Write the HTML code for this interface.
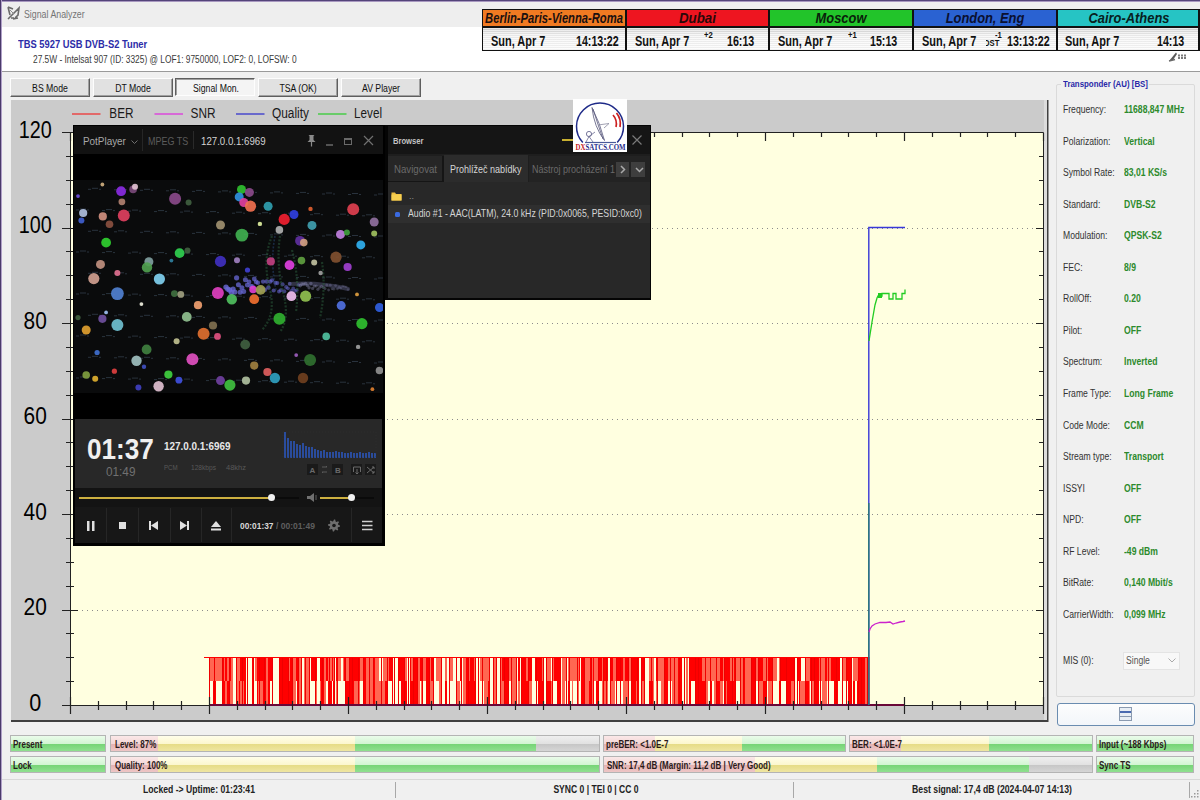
<!DOCTYPE html>
<html><head><meta charset="utf-8">
<style>
*{margin:0;padding:0;box-sizing:border-box}
html,body{width:1200px;height:800px;overflow:hidden;background:#f0f0f0;font-family:"Liberation Sans",sans-serif;position:relative}
.a{position:absolute}
.t{position:absolute;white-space:nowrap;line-height:1}
</style></head><body>
<!-- window frame -->
<div class="a" style="left:0;top:0;width:1200px;height:2px;background:linear-gradient(#54447a 0 60%,#a898c0 60%)"></div>
<div class="a" style="left:0;top:0;width:2px;height:800px;background:linear-gradient(90deg,#4a3a6a 0 60%,#b0a0c8 60%)"></div>
<!-- title bar -->
<div class="a" style="left:2px;top:2px;width:1198px;height:25px;background:#eeeeee"></div>
<svg class="a" style="left:7px;top:6px" width="14" height="14" viewBox="0 0 14 14"><path d="M1 1L6 3M1 1L3 9M1 13L12 2L11 9L8 12M4 12L7 12M6 13L11 12" stroke="#6a6a6a" stroke-width="1.6" fill="none"/><path d="M3 4L7 8" stroke="#8a8a8a" stroke-width="1"/></svg>
<div class="t" style="left:24px;top:9px;font-size:11px;color:#747474;transform:scaleX(0.8);transform-origin:0 0">Signal Analyzer</div>
<!-- header white -->
<div class="a" style="left:2px;top:27px;width:1198px;height:44px;background:#ffffff"></div>
<div class="a" style="left:2px;top:71px;width:1198px;height:1px;background:#9a9a9a"></div>
<div class="t" style="left:18px;top:39px;font-size:11px;font-weight:bold;color:#2c2ca8;transform:scaleX(0.85);transform-origin:0 0">TBS 5927 USB DVB-S2 Tuner</div>
<div class="t" style="left:33px;top:55px;font-size:10px;color:#3a3a3a;transform:scaleX(0.835);transform-origin:0 0">27.5W - Intelsat 907 (ID: 3325) @ LOF1: 9750000, LOF2: 0, LOFSW: 0</div>
<div class="a" style="left:482px;top:9px;width:718px;height:42px;background:#111"></div>
<div class="a" style="left:483px;top:10px;width:142px;height:16px;background:#f07a22"></div>
<div class="a" style="left:483px;top:28px;width:142px;height:22px;background:repeating-linear-gradient(rgba(255,255,255,0.5) 0 1px,rgba(0,0,0,0.04) 1px 2px),linear-gradient(#d2d2d2,#f2f2f2 35%,#fbfbfb)"></div>
<div class="a" style="left:627px;top:10px;width:141px;height:16px;background:#ee1520"></div>
<div class="a" style="left:627px;top:28px;width:141px;height:22px;background:repeating-linear-gradient(rgba(255,255,255,0.5) 0 1px,rgba(0,0,0,0.04) 1px 2px),linear-gradient(#d2d2d2,#f2f2f2 35%,#fbfbfb)"></div>
<div class="a" style="left:770px;top:10px;width:142px;height:16px;background:#22c42a"></div>
<div class="a" style="left:770px;top:28px;width:142px;height:22px;background:repeating-linear-gradient(rgba(255,255,255,0.5) 0 1px,rgba(0,0,0,0.04) 1px 2px),linear-gradient(#d2d2d2,#f2f2f2 35%,#fbfbfb)"></div>
<div class="a" style="left:914px;top:10px;width:142px;height:16px;background:#2a62d2"></div>
<div class="a" style="left:914px;top:28px;width:142px;height:22px;background:repeating-linear-gradient(rgba(255,255,255,0.5) 0 1px,rgba(0,0,0,0.04) 1px 2px),linear-gradient(#d2d2d2,#f2f2f2 35%,#fbfbfb)"></div>
<div class="a" style="left:1058px;top:10px;width:142px;height:16px;background:#26c4c4"></div>
<div class="a" style="left:1058px;top:28px;width:142px;height:22px;background:repeating-linear-gradient(rgba(255,255,255,0.5) 0 1px,rgba(0,0,0,0.04) 1px 2px),linear-gradient(#d2d2d2,#f2f2f2 35%,#fbfbfb)"></div>
<div class="t" style="left:443px;top:11px;width:222px;text-align:center;font-size:14px;font-weight:bold;font-style:italic;color:#1a1010;transform:scaleX(0.8)">Berlin-Paris-Vienna-Roma</div>
<div class="t" style="left:587px;top:11px;width:221px;text-align:center;font-size:14px;font-weight:bold;font-style:italic;color:#2a0808;transform:scaleX(0.95)">Dubai</div>
<div class="t" style="left:730px;top:11px;width:222px;text-align:center;font-size:14px;font-weight:bold;font-style:italic;color:#0a200a;transform:scaleX(0.92)">Moscow</div>
<div class="t" style="left:874px;top:11px;width:222px;text-align:center;font-size:14px;font-weight:bold;font-style:italic;color:#0a1030;transform:scaleX(0.92)">London, Eng</div>
<div class="t" style="left:1018px;top:11px;width:222px;text-align:center;font-size:14px;font-weight:bold;font-style:italic;color:#082020;transform:scaleX(0.92)">Cairo-Athens</div>
<div class="t" style="left:491px;top:34px;font-size:14.5px;font-weight:bold;color:#111;transform:scaleX(0.755);transform-origin:0 0">Sun, Apr 7</div>
<div class="t" style="left:635px;top:34px;font-size:14.5px;font-weight:bold;color:#111;transform:scaleX(0.755);transform-origin:0 0">Sun, Apr 7</div>
<div class="t" style="left:778px;top:34px;font-size:14.5px;font-weight:bold;color:#111;transform:scaleX(0.755);transform-origin:0 0">Sun, Apr 7</div>
<div class="t" style="left:922px;top:34px;font-size:14.5px;font-weight:bold;color:#111;transform:scaleX(0.755);transform-origin:0 0">Sun, Apr 7</div>
<div class="t" style="left:1065px;top:34px;font-size:14.5px;font-weight:bold;color:#111;transform:scaleX(0.755);transform-origin:0 0">Sun, Apr 7</div>
<div class="t" style="left:576px;top:34px;font-size:14.5px;font-weight:bold;color:#111;transform:scaleX(0.735);transform-origin:0 0">14:13:22</div>
<div class="t" style="left:727px;top:34px;font-size:14.5px;font-weight:bold;color:#111;transform:scaleX(0.735);transform-origin:0 0">16:13</div>
<div class="t" style="left:870px;top:34px;font-size:14.5px;font-weight:bold;color:#111;transform:scaleX(0.735);transform-origin:0 0">15:13</div>
<div class="t" style="left:1007px;top:34px;font-size:14.5px;font-weight:bold;color:#111;transform:scaleX(0.735);transform-origin:0 0">13:13:22</div>
<div class="t" style="left:1157px;top:34px;font-size:14.5px;font-weight:bold;color:#111;transform:scaleX(0.735);transform-origin:0 0">14:13</div>
<div class="t" style="left:704px;top:31px;font-size:8.5px;font-weight:bold;color:#111;transform:scaleX(0.9);transform-origin:0 0">+2</div>
<div class="t" style="left:848px;top:31px;font-size:8.5px;font-weight:bold;color:#111;transform:scaleX(0.9);transform-origin:0 0">+1</div>
<div class="t" style="left:995px;top:31px;font-size:8.5px;font-weight:bold;color:#111;transform:scaleX(0.9);transform-origin:0 0">-1</div>
<div class="a" style="left:986px;top:38px;width:14px;height:10px;overflow:hidden"><div class="t" style="left:-2px;top:1px;font-size:9px;font-weight:bold;color:#111;transform:scaleX(0.85);transform-origin:0 0">DST</div></div>
<div class="a" style="left:1198px;top:9px;width:2px;height:42px;background:#111"></div>
<svg class="a" style="left:1166px;top:50px" width="26" height="14" viewBox="0 0 26 14"><path d="M3 11L10 2.5L11 4L7 10Z" fill="#5a5a5a"/><path d="M3 11L9 9.5" stroke="#6a6a6a" stroke-width="1.6"/><path d="M12 5.5H20M12 8H21" stroke="#7a7a7a" stroke-width="2" stroke-dasharray="2 1"/></svg>

<div class="a" style="left:10px;top:78px;width:80px;height:19px;background:#e1e1e1;border:1px solid;border-color:#fdfdfd #5e5e5e #5e5e5e #fdfdfd;box-shadow:inset -1px -1px 0 #a0a0a0"></div>
<div class="t" style="left:10px;top:84px;width:80px;text-align:center;font-size:10px;color:#101010;transform:scaleX(0.87)">BS Mode</div>
<div class="a" style="left:93px;top:78px;width:80px;height:19px;background:#e1e1e1;border:1px solid;border-color:#fdfdfd #5e5e5e #5e5e5e #fdfdfd;box-shadow:inset -1px -1px 0 #a0a0a0"></div>
<div class="t" style="left:93px;top:84px;width:80px;text-align:center;font-size:10px;color:#101010;transform:scaleX(0.87)">DT Mode</div>
<div class="a" style="left:175px;top:78px;width:80px;height:18px;background:#f4f4f4;border:1px solid;border-color:#5e5e5e #fdfdfd #fdfdfd #5e5e5e;box-shadow:inset 1px 1px 0 #a0a0a0"></div>
<div class="t" style="left:176px;top:84px;width:80px;text-align:center;font-size:10px;color:#101010;transform:scaleX(0.87)">Signal Mon.</div>
<div class="a" style="left:258px;top:78px;width:80px;height:19px;background:#e1e1e1;border:1px solid;border-color:#fdfdfd #5e5e5e #5e5e5e #fdfdfd;box-shadow:inset -1px -1px 0 #a0a0a0"></div>
<div class="t" style="left:258px;top:84px;width:80px;text-align:center;font-size:10px;color:#101010;transform:scaleX(0.87)">TSA (OK)</div>
<div class="a" style="left:341px;top:78px;width:80px;height:19px;background:#e1e1e1;border:1px solid;border-color:#fdfdfd #5e5e5e #5e5e5e #fdfdfd;box-shadow:inset -1px -1px 0 #a0a0a0"></div>
<div class="t" style="left:341px;top:84px;width:80px;text-align:center;font-size:10px;color:#101010;transform:scaleX(0.87)">AV Player</div>

<svg class="a" style="left:0;top:0" width="1200" height="800" viewBox="0 0 1200 800">
<rect x="11" y="100" width="1037" height="620" fill="#cbcbcb"/>
<rect x="11" y="720" width="1037" height="2" fill="#404040"/>
<rect x="1044" y="100" width="3" height="620" fill="#dcdcdc"/>
<rect x="1047" y="100" width="1.5" height="622" fill="#404040"/>
<rect x="70" y="133" width="973" height="573" fill="#ffffe0"/>
<line x1="72" y1="610.5" x2="1041" y2="610.5" stroke="#8c8c8c" stroke-width="1" stroke-dasharray="1 4"/>
<line x1="72" y1="514.5" x2="1041" y2="514.5" stroke="#8c8c8c" stroke-width="1" stroke-dasharray="1 4"/>
<line x1="72" y1="419.5" x2="1041" y2="419.5" stroke="#8c8c8c" stroke-width="1" stroke-dasharray="1 4"/>
<line x1="72" y1="323.5" x2="1041" y2="323.5" stroke="#8c8c8c" stroke-width="1" stroke-dasharray="1 4"/>
<line x1="72" y1="228.5" x2="1041" y2="228.5" stroke="#8c8c8c" stroke-width="1" stroke-dasharray="1 4"/>
<g shape-rendering="crispEdges"><rect x="209" y="657" width="4" height="24" fill="#ff6652"/><rect x="209" y="681" width="4" height="24" fill="#ffffe0"/><rect x="213" y="657" width="3" height="24" fill="#ff6652"/><rect x="213" y="681" width="3" height="24" fill="#ff0000"/><rect x="216" y="657" width="2" height="24" fill="#ff6652"/><rect x="216" y="681" width="2" height="24" fill="#ffffe0"/><rect x="218" y="657" width="4" height="24" fill="#ff6652"/><rect x="218" y="681" width="4" height="24" fill="#ffffe0"/><rect x="222" y="657" width="2" height="24" fill="#ff0000"/><rect x="222" y="681" width="2" height="24" fill="#ff0000"/><rect x="224" y="657" width="1" height="24" fill="#ff6652"/><rect x="224" y="681" width="1" height="24" fill="#ff0000"/><rect x="225" y="657" width="2" height="24" fill="#ff0000"/><rect x="225" y="681" width="2" height="24" fill="#ff6652"/><rect x="227" y="657" width="2" height="24" fill="#ff6652"/><rect x="227" y="681" width="2" height="24" fill="#ff0000"/><rect x="229" y="657" width="1" height="24" fill="#ffffe0"/><rect x="229" y="681" width="1" height="24" fill="#ffffe0"/><rect x="230" y="657" width="1" height="24" fill="#ff0000"/><rect x="230" y="681" width="1" height="24" fill="#ff6652"/><rect x="231" y="657" width="2" height="24" fill="#ff6652"/><rect x="231" y="681" width="2" height="24" fill="#ff6652"/><rect x="233" y="657" width="3" height="24" fill="#ffffe0"/><rect x="233" y="681" width="3" height="24" fill="#ffffe0"/><rect x="236" y="657" width="1" height="24" fill="#ff0000"/><rect x="236" y="681" width="1" height="24" fill="#ff6652"/><rect x="237" y="657" width="2" height="24" fill="#ff6652"/><rect x="237" y="681" width="2" height="24" fill="#ff6652"/><rect x="239" y="657" width="1" height="24" fill="#ff6652"/><rect x="239" y="681" width="1" height="24" fill="#ff0000"/><rect x="240" y="657" width="1" height="24" fill="#ff0000"/><rect x="240" y="681" width="1" height="24" fill="#ff6652"/><rect x="241" y="657" width="3" height="24" fill="#ff0000"/><rect x="241" y="681" width="3" height="24" fill="#ff6652"/><rect x="244" y="657" width="2" height="24" fill="#ff0000"/><rect x="244" y="681" width="2" height="24" fill="#ff0000"/><rect x="246" y="657" width="6" height="24" fill="#ffffe0"/><rect x="246" y="681" width="6" height="24" fill="#ffffe0"/><rect x="252" y="657" width="1" height="24" fill="#ff0000"/><rect x="252" y="681" width="1" height="24" fill="#ff0000"/><rect x="253" y="657" width="2" height="24" fill="#ffffe0"/><rect x="253" y="681" width="2" height="24" fill="#ffffe0"/><rect x="255" y="657" width="2" height="24" fill="#ff6652"/><rect x="255" y="681" width="2" height="24" fill="#ffffe0"/><rect x="257" y="657" width="1" height="24" fill="#ff0000"/><rect x="257" y="681" width="1" height="24" fill="#ff0000"/><rect x="258" y="657" width="2" height="24" fill="#ff0000"/><rect x="258" y="681" width="2" height="24" fill="#ff6652"/><rect x="260" y="657" width="1" height="24" fill="#ff0000"/><rect x="260" y="681" width="1" height="24" fill="#ff6652"/><rect x="261" y="657" width="2" height="24" fill="#ff0000"/><rect x="261" y="681" width="2" height="24" fill="#ff6652"/><rect x="263" y="657" width="3" height="24" fill="#ff0000"/><rect x="263" y="681" width="3" height="24" fill="#ff0000"/><rect x="266" y="657" width="2" height="24" fill="#ff6652"/><rect x="266" y="681" width="2" height="24" fill="#ff6652"/><rect x="268" y="657" width="2" height="24" fill="#ff0000"/><rect x="268" y="681" width="2" height="24" fill="#ff0000"/><rect x="270" y="657" width="2" height="24" fill="#ff0000"/><rect x="270" y="681" width="2" height="24" fill="#ffffe0"/><rect x="272" y="657" width="3" height="24" fill="#ffffe0"/><rect x="272" y="681" width="3" height="24" fill="#ffffe0"/><rect x="275" y="657" width="1" height="24" fill="#ffffe0"/><rect x="275" y="681" width="1" height="24" fill="#ffffe0"/><rect x="276" y="657" width="3" height="24" fill="#ffffe0"/><rect x="276" y="681" width="3" height="24" fill="#ffffe0"/><rect x="279" y="657" width="1" height="24" fill="#ff0000"/><rect x="279" y="681" width="1" height="24" fill="#ff0000"/><rect x="280" y="657" width="3" height="24" fill="#ff0000"/><rect x="280" y="681" width="3" height="24" fill="#ff0000"/><rect x="283" y="657" width="1" height="24" fill="#ff0000"/><rect x="283" y="681" width="1" height="24" fill="#ff0000"/><rect x="284" y="657" width="4" height="24" fill="#ff0000"/><rect x="284" y="681" width="4" height="24" fill="#ff0000"/><rect x="288" y="657" width="2" height="24" fill="#ff6652"/><rect x="288" y="681" width="2" height="24" fill="#ff0000"/><rect x="290" y="657" width="3" height="24" fill="#ff0000"/><rect x="290" y="681" width="3" height="24" fill="#ff0000"/><rect x="293" y="657" width="3" height="24" fill="#ff6652"/><rect x="293" y="681" width="3" height="24" fill="#ff6652"/><rect x="296" y="657" width="1" height="24" fill="#ff0000"/><rect x="296" y="681" width="1" height="24" fill="#ffffe0"/><rect x="297" y="657" width="1" height="24" fill="#ff0000"/><rect x="297" y="681" width="1" height="24" fill="#ff0000"/><rect x="298" y="657" width="4" height="24" fill="#ff6652"/><rect x="298" y="681" width="4" height="24" fill="#ff6652"/><rect x="302" y="657" width="2" height="24" fill="#ffffe0"/><rect x="302" y="681" width="2" height="24" fill="#ffffe0"/><rect x="304" y="657" width="1" height="24" fill="#ff6652"/><rect x="304" y="681" width="1" height="24" fill="#ff6652"/><rect x="305" y="657" width="2" height="24" fill="#ff6652"/><rect x="305" y="681" width="2" height="24" fill="#ff6652"/><rect x="307" y="657" width="2" height="24" fill="#ff6652"/><rect x="307" y="681" width="2" height="24" fill="#ff6652"/><rect x="309" y="657" width="2" height="24" fill="#ffffe0"/><rect x="309" y="681" width="2" height="24" fill="#ffffe0"/><rect x="311" y="657" width="4" height="24" fill="#ff0000"/><rect x="311" y="681" width="4" height="24" fill="#ffffe0"/><rect x="315" y="657" width="2" height="24" fill="#ff0000"/><rect x="315" y="681" width="2" height="24" fill="#ff6652"/><rect x="317" y="657" width="3" height="24" fill="#ffffe0"/><rect x="317" y="681" width="3" height="24" fill="#ffffe0"/><rect x="320" y="657" width="1" height="24" fill="#ff0000"/><rect x="320" y="681" width="1" height="24" fill="#ff6652"/><rect x="321" y="657" width="2" height="24" fill="#ff0000"/><rect x="321" y="681" width="2" height="24" fill="#ff0000"/><rect x="323" y="657" width="1" height="24" fill="#ff0000"/><rect x="323" y="681" width="1" height="24" fill="#ff0000"/><rect x="324" y="657" width="2" height="24" fill="#ff6652"/><rect x="324" y="681" width="2" height="24" fill="#ff6652"/><rect x="326" y="657" width="2" height="24" fill="#ff0000"/><rect x="326" y="681" width="2" height="24" fill="#ffffe0"/><rect x="328" y="657" width="4" height="24" fill="#ff6652"/><rect x="328" y="681" width="4" height="24" fill="#ff0000"/><rect x="332" y="657" width="1" height="24" fill="#ff0000"/><rect x="332" y="681" width="1" height="24" fill="#ffffe0"/><rect x="333" y="657" width="2" height="24" fill="#ff6652"/><rect x="333" y="681" width="2" height="24" fill="#ff0000"/><rect x="335" y="657" width="1" height="24" fill="#ffffe0"/><rect x="335" y="681" width="1" height="24" fill="#ffffe0"/><rect x="336" y="657" width="1" height="24" fill="#ff0000"/><rect x="336" y="681" width="1" height="24" fill="#ff6652"/><rect x="337" y="657" width="1" height="24" fill="#ff0000"/><rect x="337" y="681" width="1" height="24" fill="#ff0000"/><rect x="338" y="657" width="1" height="24" fill="#ff6652"/><rect x="338" y="681" width="1" height="24" fill="#ffffe0"/><rect x="339" y="657" width="2" height="24" fill="#ff6652"/><rect x="339" y="681" width="2" height="24" fill="#ffffe0"/><rect x="341" y="657" width="2" height="24" fill="#ffffe0"/><rect x="341" y="681" width="2" height="24" fill="#ffffe0"/><rect x="343" y="657" width="1" height="24" fill="#ff6652"/><rect x="343" y="681" width="1" height="24" fill="#ffffe0"/><rect x="344" y="657" width="1" height="24" fill="#ff0000"/><rect x="344" y="681" width="1" height="24" fill="#ffffe0"/><rect x="345" y="657" width="4" height="24" fill="#ff6652"/><rect x="345" y="681" width="4" height="24" fill="#ff0000"/><rect x="349" y="657" width="1" height="24" fill="#ff0000"/><rect x="349" y="681" width="1" height="24" fill="#ff6652"/><rect x="350" y="657" width="4" height="24" fill="#ff0000"/><rect x="350" y="681" width="4" height="24" fill="#ff0000"/><rect x="354" y="657" width="2" height="24" fill="#ff0000"/><rect x="354" y="681" width="2" height="24" fill="#ff6652"/><rect x="356" y="657" width="4" height="24" fill="#ff0000"/><rect x="356" y="681" width="4" height="24" fill="#ff6652"/><rect x="360" y="657" width="3" height="24" fill="#ff6652"/><rect x="360" y="681" width="3" height="24" fill="#ffffe0"/><rect x="363" y="657" width="3" height="24" fill="#ff0000"/><rect x="363" y="681" width="3" height="24" fill="#ff0000"/><rect x="366" y="657" width="3" height="24" fill="#ff6652"/><rect x="366" y="681" width="3" height="24" fill="#ff6652"/><rect x="369" y="657" width="1" height="24" fill="#ffffe0"/><rect x="369" y="681" width="1" height="24" fill="#ffffe0"/><rect x="370" y="657" width="3" height="24" fill="#ff6652"/><rect x="370" y="681" width="3" height="24" fill="#ff6652"/><rect x="373" y="657" width="2" height="24" fill="#ff0000"/><rect x="373" y="681" width="2" height="24" fill="#ff0000"/><rect x="375" y="657" width="4" height="24" fill="#ff6652"/><rect x="375" y="681" width="4" height="24" fill="#ff6652"/><rect x="379" y="657" width="4" height="24" fill="#ffffe0"/><rect x="379" y="681" width="4" height="24" fill="#ff6652"/><rect x="383" y="657" width="2" height="24" fill="#ff6652"/><rect x="383" y="681" width="2" height="24" fill="#ff6652"/><rect x="385" y="657" width="2" height="24" fill="#ff6652"/><rect x="385" y="681" width="2" height="24" fill="#ff0000"/><rect x="387" y="657" width="2" height="24" fill="#ff6652"/><rect x="387" y="681" width="2" height="24" fill="#ffffe0"/><rect x="389" y="657" width="3" height="24" fill="#ff0000"/><rect x="389" y="681" width="3" height="24" fill="#ffffe0"/><rect x="392" y="657" width="1" height="24" fill="#ff0000"/><rect x="392" y="681" width="1" height="24" fill="#ff0000"/><rect x="393" y="657" width="6" height="24" fill="#ffffe0"/><rect x="393" y="681" width="6" height="24" fill="#ffffe0"/><rect x="399" y="657" width="2" height="24" fill="#ff0000"/><rect x="399" y="681" width="2" height="24" fill="#ffffe0"/><rect x="401" y="657" width="2" height="24" fill="#ff0000"/><rect x="401" y="681" width="2" height="24" fill="#ff0000"/><rect x="403" y="657" width="2" height="24" fill="#ff0000"/><rect x="403" y="681" width="2" height="24" fill="#ff0000"/><rect x="405" y="657" width="2" height="24" fill="#ff6652"/><rect x="405" y="681" width="2" height="24" fill="#ff0000"/><rect x="407" y="657" width="3" height="24" fill="#ffffe0"/><rect x="407" y="681" width="3" height="24" fill="#ffffe0"/><rect x="410" y="657" width="1" height="24" fill="#ff0000"/><rect x="410" y="681" width="1" height="24" fill="#ff0000"/><rect x="411" y="657" width="2" height="24" fill="#ff6652"/><rect x="411" y="681" width="2" height="24" fill="#ff0000"/><rect x="413" y="657" width="3" height="24" fill="#ff0000"/><rect x="413" y="681" width="3" height="24" fill="#ff0000"/><rect x="416" y="657" width="2" height="24" fill="#ff0000"/><rect x="416" y="681" width="2" height="24" fill="#ff0000"/><rect x="418" y="657" width="2" height="24" fill="#ff6652"/><rect x="418" y="681" width="2" height="24" fill="#ff6652"/><rect x="420" y="657" width="1" height="24" fill="#ff0000"/><rect x="420" y="681" width="1" height="24" fill="#ffffe0"/><rect x="421" y="657" width="1" height="24" fill="#ff0000"/><rect x="421" y="681" width="1" height="24" fill="#ff6652"/><rect x="422" y="657" width="2" height="24" fill="#ff6652"/><rect x="422" y="681" width="2" height="24" fill="#ffffe0"/><rect x="424" y="657" width="2" height="24" fill="#ff6652"/><rect x="424" y="681" width="2" height="24" fill="#ffffe0"/><rect x="426" y="657" width="4" height="24" fill="#ff0000"/><rect x="426" y="681" width="4" height="24" fill="#ff0000"/><rect x="430" y="657" width="1" height="24" fill="#ff6652"/><rect x="430" y="681" width="1" height="24" fill="#ff6652"/><rect x="431" y="657" width="2" height="24" fill="#ff0000"/><rect x="431" y="681" width="2" height="24" fill="#ff6652"/><rect x="433" y="657" width="3" height="24" fill="#ffffe0"/><rect x="433" y="681" width="3" height="24" fill="#ffffe0"/><rect x="436" y="657" width="3" height="24" fill="#ff6652"/><rect x="436" y="681" width="3" height="24" fill="#ffffe0"/><rect x="439" y="657" width="2" height="24" fill="#ff6652"/><rect x="439" y="681" width="2" height="24" fill="#ff6652"/><rect x="441" y="657" width="4" height="24" fill="#ffffe0"/><rect x="441" y="681" width="4" height="24" fill="#ffffe0"/><rect x="445" y="657" width="2" height="24" fill="#ff6652"/><rect x="445" y="681" width="2" height="24" fill="#ff0000"/><rect x="447" y="657" width="2" height="24" fill="#ffffe0"/><rect x="447" y="681" width="2" height="24" fill="#ffffe0"/><rect x="449" y="657" width="4" height="24" fill="#ff6652"/><rect x="449" y="681" width="4" height="24" fill="#ffffe0"/><rect x="453" y="657" width="2" height="24" fill="#ffffe0"/><rect x="453" y="681" width="2" height="24" fill="#ffffe0"/><rect x="455" y="657" width="1" height="24" fill="#ffffe0"/><rect x="455" y="681" width="1" height="24" fill="#ffffe0"/><rect x="456" y="657" width="4" height="24" fill="#ffffe0"/><rect x="456" y="681" width="4" height="24" fill="#ff6652"/><rect x="460" y="657" width="1" height="24" fill="#ff0000"/><rect x="460" y="681" width="1" height="24" fill="#ffffe0"/><rect x="461" y="657" width="2" height="24" fill="#ffffe0"/><rect x="461" y="681" width="2" height="24" fill="#ffffe0"/><rect x="463" y="657" width="2" height="24" fill="#ff6652"/><rect x="463" y="681" width="2" height="24" fill="#ff6652"/><rect x="465" y="657" width="1" height="24" fill="#ff6652"/><rect x="465" y="681" width="1" height="24" fill="#ff6652"/><rect x="466" y="657" width="2" height="24" fill="#ff0000"/><rect x="466" y="681" width="2" height="24" fill="#ff0000"/><rect x="468" y="657" width="2" height="24" fill="#ff6652"/><rect x="468" y="681" width="2" height="24" fill="#ff0000"/><rect x="470" y="657" width="1" height="24" fill="#ff0000"/><rect x="470" y="681" width="1" height="24" fill="#ff0000"/><rect x="471" y="657" width="3" height="24" fill="#ff0000"/><rect x="471" y="681" width="3" height="24" fill="#ff0000"/><rect x="474" y="657" width="2" height="24" fill="#ff6652"/><rect x="474" y="681" width="2" height="24" fill="#ff0000"/><rect x="476" y="657" width="4" height="24" fill="#ffffe0"/><rect x="476" y="681" width="4" height="24" fill="#ffffe0"/><rect x="480" y="657" width="3" height="24" fill="#ff6652"/><rect x="480" y="681" width="3" height="24" fill="#ffffe0"/><rect x="483" y="657" width="1" height="24" fill="#ff6652"/><rect x="483" y="681" width="1" height="24" fill="#ffffe0"/><rect x="484" y="657" width="4" height="24" fill="#ff6652"/><rect x="484" y="681" width="4" height="24" fill="#ff6652"/><rect x="488" y="657" width="2" height="24" fill="#ff6652"/><rect x="488" y="681" width="2" height="24" fill="#ff0000"/><rect x="490" y="657" width="3" height="24" fill="#ffffe0"/><rect x="490" y="681" width="3" height="24" fill="#ffffe0"/><rect x="493" y="657" width="4" height="24" fill="#ff6652"/><rect x="493" y="681" width="4" height="24" fill="#ff6652"/><rect x="497" y="657" width="3" height="24" fill="#ffffe0"/><rect x="497" y="681" width="3" height="24" fill="#ffffe0"/><rect x="500" y="657" width="2" height="24" fill="#ff6652"/><rect x="500" y="681" width="2" height="24" fill="#ff6652"/><rect x="502" y="657" width="1" height="24" fill="#ff0000"/><rect x="502" y="681" width="1" height="24" fill="#ff6652"/><rect x="503" y="657" width="1" height="24" fill="#ff0000"/><rect x="503" y="681" width="1" height="24" fill="#ff6652"/><rect x="504" y="657" width="3" height="24" fill="#ff0000"/><rect x="504" y="681" width="3" height="24" fill="#ff0000"/><rect x="507" y="657" width="1" height="24" fill="#ff0000"/><rect x="507" y="681" width="1" height="24" fill="#ff0000"/><rect x="508" y="657" width="3" height="24" fill="#ff6652"/><rect x="508" y="681" width="3" height="24" fill="#ffffe0"/><rect x="511" y="657" width="3" height="24" fill="#ff6652"/><rect x="511" y="681" width="3" height="24" fill="#ff6652"/><rect x="514" y="657" width="2" height="24" fill="#ff6652"/><rect x="514" y="681" width="2" height="24" fill="#ff6652"/><rect x="516" y="657" width="2" height="24" fill="#ffffe0"/><rect x="516" y="681" width="2" height="24" fill="#ffffe0"/><rect x="518" y="657" width="2" height="24" fill="#ff0000"/><rect x="518" y="681" width="2" height="24" fill="#ff6652"/><rect x="520" y="657" width="1" height="24" fill="#ffffe0"/><rect x="520" y="681" width="1" height="24" fill="#ffffe0"/><rect x="521" y="657" width="1" height="24" fill="#ffffe0"/><rect x="521" y="681" width="1" height="24" fill="#ffffe0"/><rect x="522" y="657" width="4" height="24" fill="#ff0000"/><rect x="522" y="681" width="4" height="24" fill="#ff0000"/><rect x="526" y="657" width="2" height="24" fill="#ff6652"/><rect x="526" y="681" width="2" height="24" fill="#ff0000"/><rect x="528" y="657" width="4" height="24" fill="#ff0000"/><rect x="528" y="681" width="4" height="24" fill="#ff6652"/><rect x="532" y="657" width="3" height="24" fill="#ffffe0"/><rect x="532" y="681" width="3" height="24" fill="#ffffe0"/><rect x="535" y="657" width="3" height="24" fill="#ff0000"/><rect x="535" y="681" width="3" height="24" fill="#ffffe0"/><rect x="538" y="657" width="4" height="24" fill="#ff0000"/><rect x="538" y="681" width="4" height="24" fill="#ff0000"/><rect x="542" y="657" width="2" height="24" fill="#ff6652"/><rect x="542" y="681" width="2" height="24" fill="#ff0000"/><rect x="544" y="657" width="3" height="24" fill="#ffffe0"/><rect x="544" y="681" width="3" height="24" fill="#ffffe0"/><rect x="547" y="657" width="4" height="24" fill="#ff6652"/><rect x="547" y="681" width="4" height="24" fill="#ff0000"/><rect x="551" y="657" width="1" height="24" fill="#ffffe0"/><rect x="551" y="681" width="1" height="24" fill="#ff6652"/><rect x="552" y="657" width="2" height="24" fill="#ff6652"/><rect x="552" y="681" width="2" height="24" fill="#ffffe0"/><rect x="554" y="657" width="2" height="24" fill="#ff0000"/><rect x="554" y="681" width="2" height="24" fill="#ffffe0"/><rect x="556" y="657" width="1" height="24" fill="#ff0000"/><rect x="556" y="681" width="1" height="24" fill="#ffffe0"/><rect x="557" y="657" width="1" height="24" fill="#ff0000"/><rect x="557" y="681" width="1" height="24" fill="#ff0000"/><rect x="558" y="657" width="2" height="24" fill="#ff0000"/><rect x="558" y="681" width="2" height="24" fill="#ff0000"/><rect x="560" y="657" width="2" height="24" fill="#ffffe0"/><rect x="560" y="681" width="2" height="24" fill="#ffffe0"/><rect x="562" y="657" width="2" height="24" fill="#ff6652"/><rect x="562" y="681" width="2" height="24" fill="#ff6652"/><rect x="564" y="657" width="1" height="24" fill="#ff6652"/><rect x="564" y="681" width="1" height="24" fill="#ff6652"/><rect x="565" y="657" width="2" height="24" fill="#ff6652"/><rect x="565" y="681" width="2" height="24" fill="#ffffe0"/><rect x="567" y="657" width="1" height="24" fill="#ffffe0"/><rect x="567" y="681" width="1" height="24" fill="#ffffe0"/><rect x="568" y="657" width="2" height="24" fill="#ff6652"/><rect x="568" y="681" width="2" height="24" fill="#ff0000"/><rect x="570" y="657" width="2" height="24" fill="#ff6652"/><rect x="570" y="681" width="2" height="24" fill="#ffffe0"/><rect x="572" y="657" width="1" height="24" fill="#ff6652"/><rect x="572" y="681" width="1" height="24" fill="#ff6652"/><rect x="573" y="657" width="4" height="24" fill="#ff6652"/><rect x="573" y="681" width="4" height="24" fill="#ffffe0"/><rect x="577" y="657" width="2" height="24" fill="#ff6652"/><rect x="577" y="681" width="2" height="24" fill="#ff6652"/><rect x="579" y="657" width="1" height="24" fill="#ff0000"/><rect x="579" y="681" width="1" height="24" fill="#ffffe0"/><rect x="580" y="657" width="1" height="24" fill="#ffffe0"/><rect x="580" y="681" width="1" height="24" fill="#ffffe0"/><rect x="581" y="657" width="4" height="24" fill="#ff0000"/><rect x="581" y="681" width="4" height="24" fill="#ff0000"/><rect x="585" y="657" width="2" height="24" fill="#ff6652"/><rect x="585" y="681" width="2" height="24" fill="#ff6652"/><rect x="587" y="657" width="2" height="24" fill="#ff6652"/><rect x="587" y="681" width="2" height="24" fill="#ff6652"/><rect x="589" y="657" width="1" height="24" fill="#ff6652"/><rect x="589" y="681" width="1" height="24" fill="#ff0000"/><rect x="590" y="657" width="1" height="24" fill="#ff0000"/><rect x="590" y="681" width="1" height="24" fill="#ff0000"/><rect x="591" y="657" width="2" height="24" fill="#ff6652"/><rect x="591" y="681" width="2" height="24" fill="#ff6652"/><rect x="593" y="657" width="1" height="24" fill="#ff0000"/><rect x="593" y="681" width="1" height="24" fill="#ff0000"/><rect x="594" y="657" width="2" height="24" fill="#ff6652"/><rect x="594" y="681" width="2" height="24" fill="#ffffe0"/><rect x="596" y="657" width="3" height="24" fill="#ff6652"/><rect x="596" y="681" width="3" height="24" fill="#ff0000"/><rect x="599" y="657" width="3" height="24" fill="#ff0000"/><rect x="599" y="681" width="3" height="24" fill="#ffffe0"/><rect x="602" y="657" width="2" height="24" fill="#ff6652"/><rect x="602" y="681" width="2" height="24" fill="#ff6652"/><rect x="604" y="657" width="4" height="24" fill="#ff0000"/><rect x="604" y="681" width="4" height="24" fill="#ff6652"/><rect x="608" y="657" width="2" height="24" fill="#ffffe0"/><rect x="608" y="681" width="2" height="24" fill="#ffffe0"/><rect x="610" y="657" width="3" height="24" fill="#ff0000"/><rect x="610" y="681" width="3" height="24" fill="#ff6652"/><rect x="613" y="657" width="2" height="24" fill="#ff6652"/><rect x="613" y="681" width="2" height="24" fill="#ff6652"/><rect x="615" y="657" width="1" height="24" fill="#ff6652"/><rect x="615" y="681" width="1" height="24" fill="#ffffe0"/><rect x="616" y="657" width="1" height="24" fill="#ff0000"/><rect x="616" y="681" width="1" height="24" fill="#ff0000"/><rect x="617" y="657" width="4" height="24" fill="#ff0000"/><rect x="617" y="681" width="4" height="24" fill="#ffffe0"/><rect x="621" y="657" width="2" height="24" fill="#ff0000"/><rect x="621" y="681" width="2" height="24" fill="#ffffe0"/><rect x="623" y="657" width="2" height="24" fill="#ff6652"/><rect x="623" y="681" width="2" height="24" fill="#ff6652"/><rect x="625" y="657" width="1" height="24" fill="#ff0000"/><rect x="625" y="681" width="1" height="24" fill="#ff6652"/><rect x="626" y="657" width="2" height="24" fill="#ff0000"/><rect x="626" y="681" width="2" height="24" fill="#ff6652"/><rect x="628" y="657" width="3" height="24" fill="#ff6652"/><rect x="628" y="681" width="3" height="24" fill="#ffffe0"/><rect x="631" y="657" width="3" height="24" fill="#ff0000"/><rect x="631" y="681" width="3" height="24" fill="#ff0000"/><rect x="634" y="657" width="2" height="24" fill="#ff0000"/><rect x="634" y="681" width="2" height="24" fill="#ff0000"/><rect x="636" y="657" width="1" height="24" fill="#ff0000"/><rect x="636" y="681" width="1" height="24" fill="#ff6652"/><rect x="637" y="657" width="2" height="24" fill="#ff0000"/><rect x="637" y="681" width="2" height="24" fill="#ff0000"/><rect x="639" y="657" width="3" height="24" fill="#ffffe0"/><rect x="639" y="681" width="3" height="24" fill="#ffffe0"/><rect x="642" y="657" width="3" height="24" fill="#ff0000"/><rect x="642" y="681" width="3" height="24" fill="#ff6652"/><rect x="645" y="657" width="4" height="24" fill="#ffffe0"/><rect x="645" y="681" width="4" height="24" fill="#ffffe0"/><rect x="649" y="657" width="4" height="24" fill="#ff6652"/><rect x="649" y="681" width="4" height="24" fill="#ff0000"/><rect x="653" y="657" width="1" height="24" fill="#ff6652"/><rect x="653" y="681" width="1" height="24" fill="#ff6652"/><rect x="654" y="657" width="2" height="24" fill="#ffffe0"/><rect x="654" y="681" width="2" height="24" fill="#ffffe0"/><rect x="656" y="657" width="2" height="24" fill="#ff0000"/><rect x="656" y="681" width="2" height="24" fill="#ff6652"/><rect x="658" y="657" width="3" height="24" fill="#ff6652"/><rect x="658" y="681" width="3" height="24" fill="#ffffe0"/><rect x="661" y="657" width="4" height="24" fill="#ff6652"/><rect x="661" y="681" width="4" height="24" fill="#ff6652"/><rect x="665" y="657" width="3" height="24" fill="#ff0000"/><rect x="665" y="681" width="3" height="24" fill="#ff0000"/><rect x="668" y="657" width="4" height="24" fill="#ff6652"/><rect x="668" y="681" width="4" height="24" fill="#ffffe0"/><rect x="672" y="657" width="2" height="24" fill="#ff6652"/><rect x="672" y="681" width="2" height="24" fill="#ff6652"/><rect x="674" y="657" width="4" height="24" fill="#ff6652"/><rect x="674" y="681" width="4" height="24" fill="#ff6652"/><rect x="678" y="657" width="4" height="24" fill="#ff0000"/><rect x="678" y="681" width="4" height="24" fill="#ff0000"/><rect x="682" y="657" width="4" height="24" fill="#ffffe0"/><rect x="682" y="681" width="4" height="24" fill="#ffffe0"/><rect x="686" y="657" width="2" height="24" fill="#ff6652"/><rect x="686" y="681" width="2" height="24" fill="#ff6652"/><rect x="688" y="657" width="2" height="24" fill="#ffffe0"/><rect x="688" y="681" width="2" height="24" fill="#ffffe0"/><rect x="690" y="657" width="1" height="24" fill="#ff0000"/><rect x="690" y="681" width="1" height="24" fill="#ff0000"/><rect x="691" y="657" width="4" height="24" fill="#ff0000"/><rect x="691" y="681" width="4" height="24" fill="#ffffe0"/><rect x="695" y="657" width="1" height="24" fill="#ff0000"/><rect x="695" y="681" width="1" height="24" fill="#ff6652"/><rect x="696" y="657" width="3" height="24" fill="#ff0000"/><rect x="696" y="681" width="3" height="24" fill="#ff0000"/><rect x="699" y="657" width="1" height="24" fill="#ff0000"/><rect x="699" y="681" width="1" height="24" fill="#ff0000"/><rect x="700" y="657" width="2" height="24" fill="#ff0000"/><rect x="700" y="681" width="2" height="24" fill="#ff0000"/><rect x="702" y="657" width="3" height="24" fill="#ff6652"/><rect x="702" y="681" width="3" height="24" fill="#ff0000"/><rect x="705" y="657" width="3" height="24" fill="#ff6652"/><rect x="705" y="681" width="3" height="24" fill="#ff6652"/><rect x="708" y="657" width="2" height="24" fill="#ff6652"/><rect x="708" y="681" width="2" height="24" fill="#ffffe0"/><rect x="710" y="657" width="2" height="24" fill="#ff6652"/><rect x="710" y="681" width="2" height="24" fill="#ff0000"/><rect x="712" y="657" width="2" height="24" fill="#ff6652"/><rect x="712" y="681" width="2" height="24" fill="#ffffe0"/><rect x="714" y="657" width="2" height="24" fill="#ff6652"/><rect x="714" y="681" width="2" height="24" fill="#ff6652"/><rect x="716" y="657" width="4" height="24" fill="#ff6652"/><rect x="716" y="681" width="4" height="24" fill="#ff0000"/><rect x="720" y="657" width="2" height="24" fill="#ff0000"/><rect x="720" y="681" width="2" height="24" fill="#ff6652"/><rect x="722" y="657" width="1" height="24" fill="#ff0000"/><rect x="722" y="681" width="1" height="24" fill="#ff6652"/><rect x="723" y="657" width="2" height="24" fill="#ff6652"/><rect x="723" y="681" width="2" height="24" fill="#ffffe0"/><rect x="725" y="657" width="1" height="24" fill="#ff0000"/><rect x="725" y="681" width="1" height="24" fill="#ff0000"/><rect x="726" y="657" width="1" height="24" fill="#ff0000"/><rect x="726" y="681" width="1" height="24" fill="#ff6652"/><rect x="727" y="657" width="3" height="24" fill="#ff0000"/><rect x="727" y="681" width="3" height="24" fill="#ff0000"/><rect x="730" y="657" width="2" height="24" fill="#ff6652"/><rect x="730" y="681" width="2" height="24" fill="#ff0000"/><rect x="732" y="657" width="2" height="24" fill="#ff6652"/><rect x="732" y="681" width="2" height="24" fill="#ff0000"/><rect x="734" y="657" width="2" height="24" fill="#ff0000"/><rect x="734" y="681" width="2" height="24" fill="#ff0000"/><rect x="736" y="657" width="1" height="24" fill="#ff6652"/><rect x="736" y="681" width="1" height="24" fill="#ffffe0"/><rect x="737" y="657" width="4" height="24" fill="#ff6652"/><rect x="737" y="681" width="4" height="24" fill="#ffffe0"/><rect x="741" y="657" width="3" height="24" fill="#ff6652"/><rect x="741" y="681" width="3" height="24" fill="#ff6652"/><rect x="744" y="657" width="1" height="24" fill="#ff0000"/><rect x="744" y="681" width="1" height="24" fill="#ff0000"/><rect x="745" y="657" width="4" height="24" fill="#ff6652"/><rect x="745" y="681" width="4" height="24" fill="#ff6652"/><rect x="749" y="657" width="2" height="24" fill="#ff6652"/><rect x="749" y="681" width="2" height="24" fill="#ff6652"/><rect x="751" y="657" width="1" height="24" fill="#ff0000"/><rect x="751" y="681" width="1" height="24" fill="#ff0000"/><rect x="752" y="657" width="3" height="24" fill="#ff0000"/><rect x="752" y="681" width="3" height="24" fill="#ff0000"/><rect x="755" y="657" width="3" height="24" fill="#ff6652"/><rect x="755" y="681" width="3" height="24" fill="#ffffe0"/><rect x="758" y="657" width="1" height="24" fill="#ff6652"/><rect x="758" y="681" width="1" height="24" fill="#ff6652"/><rect x="759" y="657" width="4" height="24" fill="#ff0000"/><rect x="759" y="681" width="4" height="24" fill="#ff6652"/><rect x="763" y="657" width="3" height="24" fill="#ff6652"/><rect x="763" y="681" width="3" height="24" fill="#ff0000"/><rect x="766" y="657" width="2" height="24" fill="#ff6652"/><rect x="766" y="681" width="2" height="24" fill="#ffffe0"/><rect x="768" y="657" width="4" height="24" fill="#ff0000"/><rect x="768" y="681" width="4" height="24" fill="#ff6652"/><rect x="772" y="657" width="1" height="24" fill="#ff0000"/><rect x="772" y="681" width="1" height="24" fill="#ff0000"/><rect x="773" y="657" width="4" height="24" fill="#ff6652"/><rect x="773" y="681" width="4" height="24" fill="#ffffe0"/><rect x="777" y="657" width="2" height="24" fill="#ffffe0"/><rect x="777" y="681" width="2" height="24" fill="#ffffe0"/><rect x="779" y="657" width="2" height="24" fill="#ff6652"/><rect x="779" y="681" width="2" height="24" fill="#ff0000"/><rect x="781" y="657" width="4" height="24" fill="#ff0000"/><rect x="781" y="681" width="4" height="24" fill="#ffffe0"/><rect x="785" y="657" width="2" height="24" fill="#ff0000"/><rect x="785" y="681" width="2" height="24" fill="#ffffe0"/><rect x="787" y="657" width="4" height="24" fill="#ff0000"/><rect x="787" y="681" width="4" height="24" fill="#ff0000"/><rect x="791" y="657" width="1" height="24" fill="#ff0000"/><rect x="791" y="681" width="1" height="24" fill="#ff6652"/><rect x="792" y="657" width="2" height="24" fill="#ff0000"/><rect x="792" y="681" width="2" height="24" fill="#ff6652"/><rect x="794" y="657" width="3" height="24" fill="#ffffe0"/><rect x="794" y="681" width="3" height="24" fill="#ffffe0"/><rect x="797" y="657" width="2" height="24" fill="#ff0000"/><rect x="797" y="681" width="2" height="24" fill="#ffffe0"/><rect x="799" y="657" width="1" height="24" fill="#ff0000"/><rect x="799" y="681" width="1" height="24" fill="#ff0000"/><rect x="800" y="657" width="1" height="24" fill="#ff0000"/><rect x="800" y="681" width="1" height="24" fill="#ff6652"/><rect x="801" y="657" width="4" height="24" fill="#ffffe0"/><rect x="801" y="681" width="4" height="24" fill="#ff6652"/><rect x="805" y="657" width="4" height="24" fill="#ff6652"/><rect x="805" y="681" width="4" height="24" fill="#ff0000"/><rect x="809" y="657" width="1" height="24" fill="#ff6652"/><rect x="809" y="681" width="1" height="24" fill="#ff6652"/><rect x="810" y="657" width="1" height="24" fill="#ff0000"/><rect x="810" y="681" width="1" height="24" fill="#ffffe0"/><rect x="811" y="657" width="4" height="24" fill="#ff0000"/><rect x="811" y="681" width="4" height="24" fill="#ff6652"/><rect x="815" y="657" width="4" height="24" fill="#ff0000"/><rect x="815" y="681" width="4" height="24" fill="#ff0000"/><rect x="819" y="657" width="3" height="24" fill="#ff6652"/><rect x="819" y="681" width="3" height="24" fill="#ffffe0"/><rect x="822" y="657" width="3" height="24" fill="#ff6652"/><rect x="822" y="681" width="3" height="24" fill="#ff6652"/><rect x="825" y="657" width="2" height="24" fill="#ff0000"/><rect x="825" y="681" width="2" height="24" fill="#ff6652"/><rect x="827" y="657" width="4" height="24" fill="#ff6652"/><rect x="827" y="681" width="4" height="24" fill="#ffffe0"/><rect x="831" y="657" width="3" height="24" fill="#ff0000"/><rect x="831" y="681" width="3" height="24" fill="#ffffe0"/><rect x="834" y="657" width="4" height="24" fill="#ff0000"/><rect x="834" y="681" width="4" height="24" fill="#ff0000"/><rect x="838" y="657" width="2" height="24" fill="#ff0000"/><rect x="838" y="681" width="2" height="24" fill="#ffffe0"/><rect x="840" y="657" width="3" height="24" fill="#ffffe0"/><rect x="840" y="681" width="3" height="24" fill="#ffffe0"/><rect x="843" y="657" width="1" height="24" fill="#ff6652"/><rect x="843" y="681" width="1" height="24" fill="#ffffe0"/><rect x="844" y="657" width="3" height="24" fill="#ff6652"/><rect x="844" y="681" width="3" height="24" fill="#ffffe0"/><rect x="847" y="657" width="1" height="24" fill="#ff0000"/><rect x="847" y="681" width="1" height="24" fill="#ffffe0"/><rect x="848" y="657" width="1" height="24" fill="#ff0000"/><rect x="848" y="681" width="1" height="24" fill="#ff0000"/><rect x="849" y="657" width="3" height="24" fill="#ff0000"/><rect x="849" y="681" width="3" height="24" fill="#ff0000"/><rect x="852" y="657" width="1" height="24" fill="#ffffe0"/><rect x="852" y="681" width="1" height="24" fill="#ffffe0"/><rect x="853" y="657" width="2" height="24" fill="#ff6652"/><rect x="853" y="681" width="2" height="24" fill="#ff0000"/><rect x="855" y="657" width="2" height="24" fill="#ff6652"/><rect x="855" y="681" width="2" height="24" fill="#ffffe0"/><rect x="857" y="657" width="1" height="24" fill="#ff6652"/><rect x="857" y="681" width="1" height="24" fill="#ff0000"/><rect x="858" y="657" width="1" height="24" fill="#ffffe0"/><rect x="858" y="681" width="1" height="24" fill="#ffffe0"/><rect x="859" y="657" width="2" height="24" fill="#ff0000"/><rect x="859" y="681" width="2" height="24" fill="#ff0000"/><rect x="861" y="657" width="4" height="24" fill="#ff0000"/><rect x="861" y="681" width="4" height="24" fill="#ff0000"/><rect x="865" y="657" width="3" height="24" fill="#ff6652"/><rect x="865" y="681" width="3" height="24" fill="#ff6652"/><rect x="868" y="657" width="1" height="24" fill="#ff0000"/><rect x="868" y="681" width="1" height="24" fill="#ffffe0"/></g>
<path d="M209.5 657V705M214.5 657V705M222.5 657V705M229.5 657V705M236.5 657V705M242.5 657V705M247.5 657V705M253.5 657V705M259.5 657V705M264.5 657V705M272.5 657V705M279.5 657V705M282.5 657V705M288.5 657V705M292.5 657V705M298.5 657V705M301.5 657V705M305.5 657V705M309.5 657V705M315.5 657V705M322.5 657V705M329.5 657V705M334.5 657V705M337.5 657V705M345.5 657V705M349.5 657V705M352.5 657V705M358.5 657V705M363.5 657V705M369.5 657V705M373.5 657V705M381.5 657V705M387.5 657V705M394.5 657V705M398.5 657V705M404.5 657V705M408.5 657V705M413.5 657V705M417.5 657V705M422.5 657V705M429.5 657V705M433.5 657V705M441.5 657V705M449.5 657V705M456.5 657V705M461.5 657V705M468.5 657V705M475.5 657V705M478.5 657V705M482.5 657V705M489.5 657V705M493.5 657V705M496.5 657V705M500.5 657V705M504.5 657V705M508.5 657V705M511.5 657V705M516.5 657V705M521.5 657V705M528.5 657V705M536.5 657V705M543.5 657V705M546.5 657V705M552.5 657V705M560.5 657V705M566.5 657V705M569.5 657V705M577.5 657V705M584.5 657V705M591.5 657V705M598.5 657V705M603.5 657V705M606.5 657V705M610.5 657V705M616.5 657V705M620.5 657V705M628.5 657V705M631.5 657V705M637.5 657V705M641.5 657V705M644.5 657V705M651.5 657V705M657.5 657V705M664.5 657V705M670.5 657V705M674.5 657V705M679.5 657V705M684.5 657V705M689.5 657V705M695.5 657V705M698.5 657V705M705.5 657V705M710.5 657V705M716.5 657V705M724.5 657V705M732.5 657V705M735.5 657V705M740.5 657V705M743.5 657V705M751.5 657V705M755.5 657V705M758.5 657V705M766.5 657V705M772.5 657V705M780.5 657V705M786.5 657V705M794.5 657V705M797.5 657V705M805.5 657V705M811.5 657V705M814.5 657V705M820.5 657V705M828.5 657V705M836.5 657V705M842.5 657V705M846.5 657V705M851.5 657V705M858.5 657V705M861.5 657V705M867.5 657V705" stroke="#ee0000" stroke-width="1" fill="none"/>
<line x1="204" y1="657.5" x2="869" y2="657.5" stroke="#ff0000" stroke-width="1.2"/>
<line x1="869" y1="657" x2="869" y2="705" stroke="#ff0000" stroke-width="1"/>
<path d="M70 132.5H1043.5M1043.5 132.5V705.5M70.5 132.5V714M62 705.5H1043.5" stroke="#222" stroke-width="1" fill="none"/>
<line x1="209" y1="705" x2="905" y2="705" stroke="#6a0838" stroke-width="2"/>
<path d="M70.5 697V714M70.5 133V141M98.5 701V710M98.5 133V137M126.5 701V710M126.5 133V137M153.5 701V710M153.5 133V137M181.5 701V710M181.5 133V137M209.5 697V714M209.5 133V141M237.5 701V710M237.5 133V137M265.5 701V710M265.5 133V137M292.5 701V710M292.5 133V137M320.5 701V710M320.5 133V137M348.5 697V714M348.5 133V141M376.5 701V710M376.5 133V137M404.5 701V710M404.5 133V137M431.5 701V710M431.5 133V137M459.5 701V710M459.5 133V137M487.5 697V714M487.5 133V141M515.5 701V710M515.5 133V137M543.5 701V710M543.5 133V137M570.5 701V710M570.5 133V137M598.5 701V710M598.5 133V137M626.5 697V714M626.5 133V141M654.5 701V710M654.5 133V137M682.5 701V710M682.5 133V137M709.5 701V710M709.5 133V137M737.5 701V710M737.5 133V137M765.5 697V714M765.5 133V141M793.5 701V710M793.5 133V137M821.5 701V710M821.5 133V137M848.5 701V710M848.5 133V137M876.5 701V710M876.5 133V137M904.5 697V714M904.5 133V141M932.5 701V710M932.5 133V137M960.5 701V710M960.5 133V137M987.5 701V710M987.5 133V137M1015.5 701V710M1015.5 133V137M1043.5 697V714M1043.5 133V141M62 132.5H78M1036 132.5H1043M66 156.5H74M1039 156.5H1043M66 180.5H74M1039 180.5H1043M66 204.5H74M1039 204.5H1043M62 228.5H78M1036 228.5H1043M66 251.5H74M1039 251.5H1043M66 275.5H74M1039 275.5H1043M66 299.5H74M1039 299.5H1043M62 323.5H78M1036 323.5H1043M66 347.5H74M1039 347.5H1043M66 371.5H74M1039 371.5H1043M66 395.5H74M1039 395.5H1043M62 419.5H78M1036 419.5H1043M66 442.5H74M1039 442.5H1043M66 466.5H74M1039 466.5H1043M66 490.5H74M1039 490.5H1043M62 514.5H78M1036 514.5H1043M66 538.5H74M1039 538.5H1043M66 562.5H74M1039 562.5H1043M66 586.5H74M1039 586.5H1043M62 610.5H78M1036 610.5H1043M66 633.5H74M1039 633.5H1043M66 657.5H74M1039 657.5H1043M66 681.5H74M1039 681.5H1043M62 705.5H78M1036 705.5H1043" stroke="#222" stroke-width="1.2" fill="none"/>
<text x="29.2" y="710.5" textLength="12" lengthAdjust="spacingAndGlyphs" font-family="Liberation Sans" font-size="23.5" fill="#000">0</text>
<text x="23.6" y="615.1" textLength="23.2" lengthAdjust="spacingAndGlyphs" font-family="Liberation Sans" font-size="23.5" fill="#000">20</text>
<text x="23.6" y="519.7" textLength="23.2" lengthAdjust="spacingAndGlyphs" font-family="Liberation Sans" font-size="23.5" fill="#000">40</text>
<text x="23.6" y="424.2" textLength="23.2" lengthAdjust="spacingAndGlyphs" font-family="Liberation Sans" font-size="23.5" fill="#000">60</text>
<text x="23.6" y="328.8" textLength="23.2" lengthAdjust="spacingAndGlyphs" font-family="Liberation Sans" font-size="23.5" fill="#000">80</text>
<text x="18.7" y="233.4" textLength="33" lengthAdjust="spacingAndGlyphs" font-family="Liberation Sans" font-size="23.5" fill="#000">100</text>
<text x="18.7" y="138.0" textLength="33" lengthAdjust="spacingAndGlyphs" font-family="Liberation Sans" font-size="23.5" fill="#000">120</text>
<line x1="72" y1="114" x2="100.5" y2="114" stroke="#ee3333" stroke-width="1.3"/>
<text x="109.3" y="118.3" textLength="24.2" lengthAdjust="spacingAndGlyphs" font-family="Liberation Sans" font-size="14" fill="#1a1a1a">BER</text>
<line x1="154.5" y1="114" x2="183.0" y2="114" stroke="#dd33dd" stroke-width="1.3"/>
<text x="190.5" y="118.3" textLength="25" lengthAdjust="spacingAndGlyphs" font-family="Liberation Sans" font-size="14" fill="#1a1a1a">SNR</text>
<line x1="236" y1="114" x2="264.5" y2="114" stroke="#3333cc" stroke-width="1.3"/>
<text x="272" y="118.3" textLength="37" lengthAdjust="spacingAndGlyphs" font-family="Liberation Sans" font-size="14" fill="#1a1a1a">Quality</text>
<line x1="318" y1="114" x2="346.5" y2="114" stroke="#33cc33" stroke-width="1.3"/>
<text x="354.1" y="118.3" textLength="27.9" lengthAdjust="spacingAndGlyphs" font-family="Liberation Sans" font-size="14" fill="#1a1a1a">Level</text>
<path d="M868.8 705V227.5H905" stroke="#3838d8" stroke-width="1.4" fill="none"/>
<path d="M868.8 705V503" stroke="#2a7a78" stroke-width="1.4" fill="none"/>
<path d="M869 341 L872 322 L875 305 L877 298 L878 296 L882 296 L882 293.5 L889 293.5 L889 299 L893 299 L893 293.5 L896 293.5 L896 299 L902 299 L902 293.5 L905 293.5 L905 289.5" stroke="#22cc22" stroke-width="1.3" fill="none"/>
<rect x="878" y="293" width="4" height="5" fill="#22cc22"/>
<path d="M869 632 L870 629 L872 626 L875 624 L880 622.5 L886 622.5 L890 622 L893 624 L896 623 L900 622 L903 621.5 L905 621" stroke="#cc22cc" stroke-width="1.3" fill="none"/>
</svg>
<div class="a" style="left:73px;top:125px;width:312px;height:421px;background:#000"></div>
<div class="a" style="left:383px;top:125px;width:5px;height:174px;background:#000"></div>
<div class="a" style="left:74px;top:126px;width:309px;height:28px;background:#121212"></div>
<div class="a" style="left:142px;top:129px;width:1px;height:22px;background:#262626"></div>
<div class="a" style="left:193px;top:131px;width:1px;height:18px;background:#2a2a2a"></div>
<div class="t" style="left:83px;top:136px;font-size:11px;color:#a8a8a8;transform:scaleX(0.9);transform-origin:0 0">PotPlayer</div>
<svg class="a" style="left:131px;top:140px" width="7" height="5"><path d="M0.5 0.5L3.5 3.5L6.5 0.5" stroke="#707070" fill="none"/></svg>
<div class="t" style="left:148px;top:136px;font-size:11px;color:#5c5c5c;transform:scaleX(0.815);transform-origin:0 0">MPEG TS</div>
<div class="t" style="left:201px;top:136px;font-size:11px;color:#d4d4d4;transform:scaleX(0.88);transform-origin:0 0">127.0.0.1:6969</div>
<svg class="a" style="left:300px;top:133px" width="80" height="16" viewBox="0 0 80 16"><path d="M8.5 2H14.5L13.5 3V7L15.5 9H7.5L9.5 7V3Z" fill="#8a8a8a"/><path d="M11.5 9V13.5" stroke="#8a8a8a" stroke-width="1.2"/><path d="M26 12H33" stroke="#6a6a6a" stroke-width="1.5"/><rect x="44.5" y="5.5" width="7" height="6" stroke="#6a6a6a" stroke-width="1" fill="none"/><path d="M44 6H52" stroke="#6a6a6a" stroke-width="2"/><path d="M64 3L73 12M73 3L64 12" stroke="#707070" stroke-width="1.2"/></svg>
<svg class="a" style="left:74px;top:180px" width="309" height="213" viewBox="74 180 309 213"><rect x="74" y="180" width="309" height="213" fill="#0a0b0c"/><g stroke="#34404e" stroke-width="1" opacity="0.75"><path d="M88 189.3h3M92 188.3h6M99 189.3h2"/><path d="M114 189.8h3M118 188.8h6M125 189.8h2"/><path d="M140 190.3h3M144 189.3h6M151 190.3h2"/><path d="M166 190.8h3M170 189.8h6M177 190.8h2"/><path d="M192 191.4h3M196 190.4h6M203 191.4h2"/><path d="M218 191.9h3M222 190.9h6M229 191.9h2"/><path d="M244 192.4h3M248 191.4h6M255 192.4h2"/><path d="M270 192.9h3M274 191.9h6M281 192.9h2"/><path d="M296 193.4h3M300 192.4h6M307 193.4h2"/><path d="M322 194.0h3M326 193.0h6M333 194.0h2"/><path d="M348 194.5h3M352 193.5h6M359 194.5h2"/><path d="M374 195.0h3M378 194.0h6M385 195.0h2"/><path d="M76 210.0h3M80 209.0h6M87 210.0h2"/><path d="M102 210.6h3M106 209.6h6M113 210.6h2"/><path d="M128 211.1h3M132 210.1h6M139 211.1h2"/><path d="M154 211.6h3M158 210.6h6M165 211.6h2"/><path d="M180 212.1h3M184 211.1h6M191 212.1h2"/><path d="M206 212.6h3M210 211.6h6M217 212.6h2"/><path d="M232 213.2h3M236 212.2h6M243 213.2h2"/><path d="M258 213.7h3M262 212.7h6M269 213.7h2"/><path d="M284 214.2h3M288 213.2h6M295 214.2h2"/><path d="M310 214.7h3M314 213.7h6M321 214.7h2"/><path d="M336 215.2h3M340 214.2h6M347 215.2h2"/><path d="M362 215.8h3M366 214.8h6M373 215.8h2"/><path d="M88 231.3h3M92 230.3h6M99 231.3h2"/><path d="M114 231.8h3M118 230.8h6M125 231.8h2"/><path d="M140 232.3h3M144 231.3h6M151 232.3h2"/><path d="M166 232.8h3M170 231.8h6M177 232.8h2"/><path d="M192 233.4h3M196 232.4h6M203 233.4h2"/><path d="M218 233.9h3M222 232.9h6M229 233.9h2"/><path d="M244 234.4h3M248 233.4h6M255 234.4h2"/><path d="M270 234.9h3M274 233.9h6M281 234.9h2"/><path d="M296 235.4h3M300 234.4h6M307 235.4h2"/><path d="M322 236.0h3M326 235.0h6M333 236.0h2"/><path d="M348 236.5h3M352 235.5h6M359 236.5h2"/><path d="M374 237.0h3M378 236.0h6M385 237.0h2"/><path d="M76 252.0h3M80 251.0h6M87 252.0h2"/><path d="M102 252.6h3M106 251.6h6M113 252.6h2"/><path d="M128 253.1h3M132 252.1h6M139 253.1h2"/><path d="M154 253.6h3M158 252.6h6M165 253.6h2"/><path d="M180 254.1h3M184 253.1h6M191 254.1h2"/><path d="M206 254.6h3M210 253.6h6M217 254.6h2"/><path d="M232 255.2h3M236 254.2h6M243 255.2h2"/><path d="M258 255.7h3M262 254.7h6M269 255.7h2"/><path d="M284 256.2h3M288 255.2h6M295 256.2h2"/><path d="M310 256.7h3M314 255.7h6M321 256.7h2"/><path d="M336 257.2h3M340 256.2h6M347 257.2h2"/><path d="M362 257.8h3M366 256.8h6M373 257.8h2"/><path d="M88 273.3h3M92 272.3h6M99 273.3h2"/><path d="M114 273.8h3M118 272.8h6M125 273.8h2"/><path d="M140 274.3h3M144 273.3h6M151 274.3h2"/><path d="M166 274.8h3M170 273.8h6M177 274.8h2"/><path d="M192 275.4h3M196 274.4h6M203 275.4h2"/><path d="M218 275.9h3M222 274.9h6M229 275.9h2"/><path d="M244 276.4h3M248 275.4h6M255 276.4h2"/><path d="M270 276.9h3M274 275.9h6M281 276.9h2"/><path d="M296 277.4h3M300 276.4h6M307 277.4h2"/><path d="M322 278.0h3M326 277.0h6M333 278.0h2"/><path d="M348 278.5h3M352 277.5h6M359 278.5h2"/><path d="M374 279.0h3M378 278.0h6M385 279.0h2"/><path d="M76 294.0h3M80 293.0h6M87 294.0h2"/><path d="M102 294.6h3M106 293.6h6M113 294.6h2"/><path d="M128 295.1h3M132 294.1h6M139 295.1h2"/><path d="M154 295.6h3M158 294.6h6M165 295.6h2"/><path d="M180 296.1h3M184 295.1h6M191 296.1h2"/><path d="M206 296.6h3M210 295.6h6M217 296.6h2"/><path d="M232 297.2h3M236 296.2h6M243 297.2h2"/><path d="M258 297.7h3M262 296.7h6M269 297.7h2"/><path d="M284 298.2h3M288 297.2h6M295 298.2h2"/><path d="M310 298.7h3M314 297.7h6M321 298.7h2"/><path d="M336 299.2h3M340 298.2h6M347 299.2h2"/><path d="M362 299.8h3M366 298.8h6M373 299.8h2"/><path d="M88 315.3h3M92 314.3h6M99 315.3h2"/><path d="M114 315.8h3M118 314.8h6M125 315.8h2"/><path d="M140 316.3h3M144 315.3h6M151 316.3h2"/><path d="M166 316.8h3M170 315.8h6M177 316.8h2"/><path d="M192 317.4h3M196 316.4h6M203 317.4h2"/><path d="M218 317.9h3M222 316.9h6M229 317.9h2"/><path d="M244 318.4h3M248 317.4h6M255 318.4h2"/><path d="M270 318.9h3M274 317.9h6M281 318.9h2"/><path d="M296 319.4h3M300 318.4h6M307 319.4h2"/><path d="M322 320.0h3M326 319.0h6M333 320.0h2"/><path d="M348 320.5h3M352 319.5h6M359 320.5h2"/><path d="M374 321.0h3M378 320.0h6M385 321.0h2"/><path d="M76 336.0h3M80 335.0h6M87 336.0h2"/><path d="M102 336.6h3M106 335.6h6M113 336.6h2"/><path d="M128 337.1h3M132 336.1h6M139 337.1h2"/><path d="M154 337.6h3M158 336.6h6M165 337.6h2"/><path d="M180 338.1h3M184 337.1h6M191 338.1h2"/><path d="M206 338.6h3M210 337.6h6M217 338.6h2"/><path d="M232 339.2h3M236 338.2h6M243 339.2h2"/><path d="M258 339.7h3M262 338.7h6M269 339.7h2"/><path d="M284 340.2h3M288 339.2h6M295 340.2h2"/><path d="M310 340.7h3M314 339.7h6M321 340.7h2"/><path d="M336 341.2h3M340 340.2h6M347 341.2h2"/><path d="M362 341.8h3M366 340.8h6M373 341.8h2"/><path d="M88 357.3h3M92 356.3h6M99 357.3h2"/><path d="M114 357.8h3M118 356.8h6M125 357.8h2"/><path d="M140 358.3h3M144 357.3h6M151 358.3h2"/><path d="M166 358.8h3M170 357.8h6M177 358.8h2"/><path d="M192 359.4h3M196 358.4h6M203 359.4h2"/><path d="M218 359.9h3M222 358.9h6M229 359.9h2"/><path d="M244 360.4h3M248 359.4h6M255 360.4h2"/><path d="M270 360.9h3M274 359.9h6M281 360.9h2"/><path d="M296 361.4h3M300 360.4h6M307 361.4h2"/><path d="M322 362.0h3M326 361.0h6M333 362.0h2"/><path d="M348 362.5h3M352 361.5h6M359 362.5h2"/><path d="M374 363.0h3M378 362.0h6M385 363.0h2"/><path d="M76 378.0h3M80 377.0h6M87 378.0h2"/><path d="M102 378.6h3M106 377.6h6M113 378.6h2"/><path d="M128 379.1h3M132 378.1h6M139 379.1h2"/><path d="M154 379.6h3M158 378.6h6M165 379.6h2"/><path d="M180 380.1h3M184 379.1h6M191 380.1h2"/><path d="M206 380.6h3M210 379.6h6M217 380.6h2"/><path d="M232 381.2h3M236 380.2h6M243 381.2h2"/><path d="M258 381.7h3M262 380.7h6M269 381.7h2"/><path d="M284 382.2h3M288 381.2h6M295 382.2h2"/><path d="M310 382.7h3M314 381.7h6M321 382.7h2"/><path d="M336 383.2h3M340 382.2h6M347 383.2h2"/><path d="M362 383.8h3M366 382.8h6M373 383.8h2"/></g><circle cx="226.0" cy="287.1" r="2.7" fill="#6a6ad8" opacity="0.80"/><circle cx="227.8" cy="289.1" r="2.7" fill="#6a6ad8" opacity="0.79"/><circle cx="229.5" cy="290.0" r="2.7" fill="#6a6ad8" opacity="0.78"/><circle cx="231.3" cy="292.4" r="2.6" fill="#6a6ad8" opacity="0.78"/><circle cx="233.1" cy="289.1" r="2.6" fill="#6a6ad8" opacity="0.77"/><circle cx="234.8" cy="292.0" r="2.6" fill="#6a6ad8" opacity="0.76"/><circle cx="236.6" cy="277.8" r="2.6" fill="#6a6ad8" opacity="0.75"/><circle cx="238.4" cy="284.8" r="2.5" fill="#6a6ad8" opacity="0.74"/><circle cx="240.1" cy="292.2" r="2.5" fill="#6a6ad8" opacity="0.74"/><circle cx="241.9" cy="287.7" r="2.5" fill="#6a6ad8" opacity="0.73"/><circle cx="243.7" cy="291.4" r="2.5" fill="#6a6ad8" opacity="0.72"/><circle cx="245.4" cy="279.8" r="2.5" fill="#6a6ad8" opacity="0.71"/><circle cx="247.2" cy="285.1" r="2.4" fill="#6a6ad8" opacity="0.70"/><circle cx="249.0" cy="281.9" r="2.4" fill="#6a6ad8" opacity="0.70"/><circle cx="250.8" cy="286.2" r="2.4" fill="#6a6ad8" opacity="0.69"/><circle cx="252.5" cy="286.7" r="2.4" fill="#6a6ad8" opacity="0.68"/><circle cx="254.3" cy="279.0" r="2.4" fill="#6a6ad8" opacity="0.67"/><circle cx="256.1" cy="281.9" r="2.3" fill="#6a6ad8" opacity="0.66"/><circle cx="257.8" cy="282.8" r="2.3" fill="#6a6ad8" opacity="0.66"/><circle cx="259.6" cy="291.3" r="2.3" fill="#6a6ad8" opacity="0.65"/><circle cx="261.4" cy="289.3" r="2.3" fill="#6a6ad8" opacity="0.64"/><circle cx="263.1" cy="281.6" r="2.2" fill="#6a6ad8" opacity="0.63"/><circle cx="264.9" cy="289.7" r="2.2" fill="#6a6ad8" opacity="0.62"/><circle cx="266.7" cy="281.5" r="2.2" fill="#6a6ad8" opacity="0.62"/><circle cx="268.4" cy="287.5" r="2.2" fill="#6a6ad8" opacity="0.61"/><circle cx="270.2" cy="281.6" r="2.2" fill="#6a6ad8" opacity="0.60"/><circle cx="272.0" cy="280.3" r="2.1" fill="#6a6ad8" opacity="0.59"/><circle cx="273.7" cy="290.5" r="2.1" fill="#6a6ad8" opacity="0.58"/><circle cx="275.5" cy="282.9" r="2.1" fill="#6a6ad8" opacity="0.58"/><circle cx="277.3" cy="283.1" r="2.1" fill="#6a6ad8" opacity="0.57"/><circle cx="279.0" cy="291.6" r="2.0" fill="#6a6ad8" opacity="0.56"/><circle cx="280.8" cy="290.3" r="2.0" fill="#6a6ad8" opacity="0.55"/><circle cx="282.6" cy="284.2" r="2.0" fill="#6a6ad8" opacity="0.54"/><circle cx="284.3" cy="291.2" r="2.0" fill="#6a6ad8" opacity="0.54"/><circle cx="286.1" cy="286.9" r="2.0" fill="#6a6ad8" opacity="0.53"/><circle cx="287.9" cy="288.3" r="1.9" fill="#6a6ad8" opacity="0.52"/><circle cx="289.7" cy="283.7" r="1.9" fill="#6a6ad8" opacity="0.51"/><circle cx="291.4" cy="290.8" r="1.9" fill="#6a6ad8" opacity="0.51"/><circle cx="293.2" cy="288.4" r="1.9" fill="#6a6ad8" opacity="0.50"/><circle cx="295.0" cy="290.9" r="1.9" fill="#6a6ad8" opacity="0.49"/><circle cx="296.7" cy="290.2" r="1.8" fill="#6a6ad8" opacity="0.48"/><circle cx="298.5" cy="285.0" r="1.8" fill="#6a6ad8" opacity="0.47"/><circle cx="300.3" cy="285.6" r="1.8" fill="#8a8ab0" opacity="0.47"/><circle cx="302.0" cy="284.1" r="1.8" fill="#8a8ab0" opacity="0.46"/><circle cx="303.8" cy="284.1" r="1.7" fill="#8a8ab0" opacity="0.45"/><circle cx="305.6" cy="283.5" r="1.7" fill="#8a8ab0" opacity="0.44"/><circle cx="307.3" cy="285.5" r="1.7" fill="#8a8ab0" opacity="0.43"/><circle cx="309.1" cy="287.8" r="1.7" fill="#8a8ab0" opacity="0.43"/><circle cx="310.9" cy="283.5" r="1.7" fill="#8a8ab0" opacity="0.42"/><circle cx="312.6" cy="288.4" r="1.6" fill="#8a8ab0" opacity="0.41"/><circle cx="314.4" cy="286.1" r="1.6" fill="#8a8ab0" opacity="0.40"/><circle cx="316.2" cy="286.0" r="1.6" fill="#8a8ab0" opacity="0.39"/><circle cx="317.9" cy="289.3" r="1.6" fill="#8a8ab0" opacity="0.39"/><circle cx="319.7" cy="287.2" r="1.5" fill="#8a8ab0" opacity="0.38"/><circle cx="321.5" cy="286.2" r="1.5" fill="#8a8ab0" opacity="0.37"/><circle cx="323.2" cy="287.3" r="1.5" fill="#8a8ab0" opacity="0.36"/><circle cx="325.0" cy="288.6" r="1.5" fill="#8a8ab0" opacity="0.35"/><circle cx="326.8" cy="285.1" r="1.5" fill="#8a8ab0" opacity="0.35"/><circle cx="328.6" cy="290.0" r="1.4" fill="#8a8ab0" opacity="0.34"/><circle cx="330.3" cy="285.2" r="1.4" fill="#8a8ab0" opacity="0.33"/><circle cx="332.1" cy="288.8" r="1.4" fill="#8a8ab0" opacity="0.32"/><circle cx="333.9" cy="289.2" r="1.4" fill="#8a8ab0" opacity="0.31"/><circle cx="335.6" cy="285.6" r="1.4" fill="#8a8ab0" opacity="0.31"/><circle cx="337.4" cy="289.0" r="1.3" fill="#8a8ab0" opacity="0.30"/><circle cx="339.2" cy="287.2" r="1.3" fill="#8a8ab0" opacity="0.29"/><circle cx="340.9" cy="288.1" r="1.3" fill="#8a8ab0" opacity="0.28"/><circle cx="342.7" cy="286.1" r="1.3" fill="#8a8ab0" opacity="0.27"/><circle cx="344.5" cy="286.4" r="1.2" fill="#8a8ab0" opacity="0.27"/><circle cx="346.2" cy="286.9" r="1.2" fill="#8a8ab0" opacity="0.26"/><circle cx="348.0" cy="289.4" r="1.2" fill="#8a8ab0" opacity="0.25"/><path d="M290 284Q320 282 348 289" stroke="#7a7ab0" stroke-width="4" fill="none" opacity="0.35" stroke-linecap="round"/><path d="M272 236Q262 260 270 290Q276 315 262 330M280 236Q276 262 283 292Q290 318 280 332M292 250Q300 280 296 312M322 262Q326 290 320 318" stroke="#2a5a3a" stroke-width="2.2" fill="none" opacity="0.55" stroke-dasharray="2 1.5"/><path d="M275 236Q270 262 276 290" stroke="#2a4a7a" stroke-width="1.6" fill="none" opacity="0.5" stroke-dasharray="2 1.5"/><circle cx="121.1" cy="191.2" r="4.9" fill="#8a2be2" opacity="0.92"/><circle cx="133.1" cy="189.4" r="3.8" fill="#7a4a7a" opacity="0.92"/><circle cx="135.0" cy="186.8" r="3.0" fill="#e0c0d0" opacity="0.92"/><circle cx="102.4" cy="184.5" r="1.9" fill="#d0b080" opacity="0.92"/><circle cx="78.0" cy="196.1" r="1.9" fill="#7050e0" opacity="0.92"/><circle cx="121.9" cy="201.8" r="3.4" fill="#b08070" opacity="0.92"/><circle cx="175.1" cy="198.8" r="6.0" fill="#8a4a8a" opacity="0.92"/><circle cx="188.6" cy="202.5" r="3.0" fill="#406040" opacity="0.92"/><circle cx="83.2" cy="213.0" r="4.1" fill="#b0c0e0" opacity="0.92"/><circle cx="81.4" cy="220.5" r="3.0" fill="#4060d0" opacity="0.92"/><circle cx="102.8" cy="216.4" r="4.1" fill="#d09080" opacity="0.92"/><circle cx="109.5" cy="224.2" r="3.8" fill="#8a5040" opacity="0.92"/><circle cx="123.8" cy="215.6" r="6.0" fill="#e04060" opacity="0.92"/><circle cx="241.5" cy="189.4" r="4.5" fill="#30c030" opacity="0.92"/><circle cx="249.4" cy="192.4" r="4.5" fill="#8a4a8a" opacity="0.92"/><circle cx="239.2" cy="196.9" r="4.5" fill="#3090e0" opacity="0.92"/><circle cx="243.8" cy="202.5" r="4.5" fill="#e040a0" opacity="0.92"/><circle cx="250.5" cy="206.2" r="5.6" fill="#f07050" opacity="0.92"/><circle cx="268.1" cy="206.2" r="4.5" fill="#30a0b0" opacity="0.92"/><circle cx="310.5" cy="208.9" r="2.2" fill="#e06030" opacity="0.92"/><circle cx="353.2" cy="209.2" r="6.0" fill="#e04050" opacity="0.92"/><circle cx="284.2" cy="219.4" r="5.6" fill="#f02030" opacity="0.92"/><circle cx="294.0" cy="214.5" r="4.5" fill="#3040e0" opacity="0.92"/><circle cx="259.9" cy="223.9" r="2.2" fill="#e0f0a0" opacity="0.92"/><circle cx="220.5" cy="225.0" r="4.5" fill="#a09070" opacity="0.92"/><circle cx="279.4" cy="229.9" r="3.8" fill="#b0b0b0" opacity="0.92"/><circle cx="312.0" cy="225.4" r="4.5" fill="#40a0b0" opacity="0.92"/><circle cx="374.2" cy="222.0" r="4.5" fill="#9070a0" opacity="0.92"/><circle cx="374.2" cy="233.6" r="3.0" fill="#a0c060" opacity="0.92"/><circle cx="241.9" cy="235.1" r="6.4" fill="#40b050" opacity="0.92"/><circle cx="106.1" cy="242.6" r="4.9" fill="#30d030" opacity="0.92"/><circle cx="187.5" cy="250.5" r="3.0" fill="#406040" opacity="0.92"/><circle cx="179.6" cy="253.1" r="4.9" fill="#30d050" opacity="0.92"/><circle cx="300.0" cy="240.8" r="4.9" fill="#6030a0" opacity="0.92"/><circle cx="303.8" cy="242.6" r="3.8" fill="#d0a080" opacity="0.92"/><circle cx="340.5" cy="234.4" r="4.5" fill="#c080e0" opacity="0.92"/><circle cx="346.9" cy="232.5" r="3.0" fill="#40a040" opacity="0.92"/><circle cx="360.8" cy="244.9" r="4.5" fill="#30b0f0" opacity="0.92"/><circle cx="100.5" cy="264.4" r="4.5" fill="#c09080" opacity="0.92"/><circle cx="148.9" cy="261.8" r="4.5" fill="#80a0a0" opacity="0.92"/><circle cx="147.0" cy="267.4" r="5.2" fill="#50a050" opacity="0.92"/><circle cx="171.4" cy="260.6" r="1.9" fill="#3080a0" opacity="0.92"/><circle cx="220.5" cy="261.4" r="5.6" fill="#4030c0" opacity="0.92"/><circle cx="237.0" cy="260.2" r="3.0" fill="#a080c0" opacity="0.92"/><circle cx="247.5" cy="270.0" r="2.6" fill="#4040d0" opacity="0.92"/><circle cx="270.8" cy="261.4" r="4.1" fill="#c04080" opacity="0.92"/><circle cx="289.5" cy="265.1" r="4.9" fill="#e040e0" opacity="0.92"/><circle cx="301.5" cy="260.6" r="3.8" fill="#60a040" opacity="0.92"/><circle cx="314.2" cy="262.5" r="3.0" fill="#c0c0a0" opacity="0.92"/><circle cx="336.0" cy="257.2" r="5.6" fill="#805030" opacity="0.92"/><circle cx="347.6" cy="267.0" r="4.1" fill="#a040d0" opacity="0.92"/><circle cx="320.6" cy="273.0" r="2.2" fill="#a0a0a0" opacity="0.92"/><circle cx="117.4" cy="273.0" r="3.0" fill="#e07090" opacity="0.92"/><circle cx="93.8" cy="278.6" r="5.6" fill="#d0a090" opacity="0.92"/><circle cx="159.4" cy="279.0" r="5.6" fill="#80d0f0" opacity="0.92"/><circle cx="117.4" cy="293.6" r="6.4" fill="#5080d0" opacity="0.92"/><circle cx="174.4" cy="293.6" r="3.4" fill="#407040" opacity="0.92"/><circle cx="180.8" cy="294.4" r="3.4" fill="#a0a080" opacity="0.92"/><circle cx="217.9" cy="292.9" r="6.0" fill="#e040c0" opacity="0.92"/><circle cx="231.8" cy="299.2" r="5.2" fill="#50c060" opacity="0.92"/><circle cx="253.1" cy="289.5" r="3.8" fill="#e040d0" opacity="0.92"/><circle cx="260.6" cy="289.9" r="4.9" fill="#a0a050" opacity="0.92"/><circle cx="254.2" cy="299.2" r="4.9" fill="#f07030" opacity="0.92"/><circle cx="291.4" cy="296.2" r="4.9" fill="#f0c0f0" opacity="0.92"/><circle cx="305.6" cy="296.2" r="5.6" fill="#90c050" opacity="0.92"/><circle cx="357.0" cy="294.4" r="1.9" fill="#e0a040" opacity="0.92"/><circle cx="341.2" cy="305.6" r="4.5" fill="#5070e0" opacity="0.92"/><circle cx="379.5" cy="307.5" r="4.5" fill="#3060e0" opacity="0.92"/><circle cx="141.4" cy="304.1" r="1.9" fill="#f0f0e0" opacity="0.92"/><circle cx="198.0" cy="305.2" r="4.1" fill="#f0a070" opacity="0.92"/><circle cx="106.1" cy="312.4" r="1.9" fill="#a0c0f0" opacity="0.92"/><circle cx="102.4" cy="318.8" r="4.1" fill="#7050a0" opacity="0.92"/><circle cx="78.0" cy="317.6" r="2.6" fill="#406040" opacity="0.92"/><circle cx="186.8" cy="316.9" r="4.9" fill="#90c090" opacity="0.92"/><circle cx="279.4" cy="318.8" r="6.0" fill="#30b030" opacity="0.92"/><circle cx="117.4" cy="325.1" r="6.0" fill="#70c0d0" opacity="0.92"/><circle cx="361.9" cy="323.6" r="5.6" fill="#30c030" opacity="0.92"/><circle cx="86.2" cy="330.0" r="4.5" fill="#e0a030" opacity="0.92"/><circle cx="213.0" cy="325.5" r="4.1" fill="#807050" opacity="0.92"/><circle cx="203.6" cy="333.8" r="6.0" fill="#e07030" opacity="0.92"/><circle cx="217.5" cy="336.4" r="3.4" fill="#e05080" opacity="0.92"/><circle cx="326.2" cy="336.4" r="3.8" fill="#50c0a0" opacity="0.92"/><circle cx="176.6" cy="341.2" r="3.0" fill="#c0c090" opacity="0.92"/><circle cx="245.2" cy="344.6" r="4.9" fill="#406040" opacity="0.92"/><circle cx="146.6" cy="349.5" r="4.9" fill="#408040" opacity="0.92"/><circle cx="97.1" cy="352.5" r="2.6" fill="#4070d0" opacity="0.92"/><circle cx="358.1" cy="346.9" r="2.2" fill="#a0a0a0" opacity="0.92"/><circle cx="296.2" cy="355.1" r="1.9" fill="#a060c0" opacity="0.92"/><circle cx="310.1" cy="360.0" r="6.0" fill="#307030" opacity="0.92"/><circle cx="192.4" cy="359.2" r="6.0" fill="#e050c0" opacity="0.92"/><circle cx="136.5" cy="360.8" r="5.2" fill="#a0c0c0" opacity="0.92"/><circle cx="144.0" cy="366.8" r="2.2" fill="#4050c0" opacity="0.92"/><circle cx="254.2" cy="365.6" r="4.1" fill="#a08040" opacity="0.92"/><circle cx="267.4" cy="372.0" r="4.1" fill="#e06060" opacity="0.92"/><circle cx="274.9" cy="378.0" r="5.2" fill="#30a0c0" opacity="0.92"/><circle cx="379.5" cy="370.5" r="3.8" fill="#909090" opacity="0.92"/><circle cx="114.4" cy="371.2" r="2.6" fill="#e04040" opacity="0.92"/><circle cx="86.2" cy="375.0" r="3.8" fill="#80a040" opacity="0.92"/><circle cx="95.2" cy="378.8" r="3.0" fill="#e0b030" opacity="0.92"/><circle cx="168.4" cy="374.6" r="4.1" fill="#40d040" opacity="0.92"/><circle cx="220.5" cy="380.6" r="4.5" fill="#7040a0" opacity="0.92"/><circle cx="246.0" cy="380.6" r="4.1" fill="#b0c0a0" opacity="0.92"/><circle cx="303.0" cy="378.0" r="5.2" fill="#704020" opacity="0.92"/><circle cx="178.9" cy="380.2" r="3.4" fill="#4050e0" opacity="0.92"/><circle cx="158.6" cy="386.2" r="5.2" fill="#e0c0d0" opacity="0.92"/><circle cx="229.9" cy="385.1" r="5.6" fill="#40c040" opacity="0.92"/><circle cx="138.4" cy="387.4" r="3.0" fill="#4040c0" opacity="0.92"/><circle cx="372.4" cy="389.2" r="1.9" fill="#e08030" opacity="0.92"/></svg>
<div class="a" style="left:75px;top:419px;width:307px;height:69px;background:#282828"></div>
<div class="t" style="left:87px;top:435px;font-size:29px;font-weight:bold;color:#f0f0f0;transform:scaleX(0.9);transform-origin:0 0">01:37</div>
<div class="t" style="left:106px;top:465px;font-size:13px;color:#707070;transform:scaleX(0.905);transform-origin:0 0">01:49</div>
<div class="t" style="left:164px;top:441px;font-size:11px;font-weight:bold;color:#e8e8e8;transform:scaleX(0.9);transform-origin:0 0">127.0.0.1:6969</div>
<div class="t" style="left:164px;top:464px;font-size:7.5px;color:#585858;transform:scaleX(0.82);transform-origin:0 0">PCM</div>
<div class="t" style="left:191px;top:464px;font-size:7.5px;color:#585858;transform:scaleX(0.88);transform-origin:0 0">128kbps</div>
<div class="t" style="left:226px;top:464px;font-size:7.5px;color:#585858">48khz</div>
<svg class="a" style="left:0;top:0" width="400" height="560"><rect x="284" y="432" width="2" height="26" fill="#2a4c9c"/><rect x="287" y="438" width="2" height="20" fill="#2a4c9c"/><rect x="290" y="441" width="2" height="17" fill="#2a4c9c"/><rect x="293" y="441" width="2" height="17" fill="#2a4c9c"/><rect x="296" y="444" width="2" height="14" fill="#2a4c9c"/><rect x="299" y="445" width="2" height="13" fill="#2a4c9c"/><rect x="302" y="443" width="2" height="15" fill="#2a4c9c"/><rect x="305" y="446" width="2" height="12" fill="#2a4c9c"/><rect x="308" y="447" width="2" height="11" fill="#2a4c9c"/><rect x="311" y="447" width="2" height="11" fill="#2a4c9c"/><rect x="314" y="449" width="2" height="9" fill="#2a4c9c"/><rect x="317" y="450" width="2" height="8" fill="#2a4c9c"/><rect x="320" y="451" width="2" height="7" fill="#2a4c9c"/><rect x="323" y="450" width="2" height="8" fill="#2a4c9c"/><rect x="326" y="452" width="2" height="6" fill="#2a4c9c"/><rect x="329" y="452" width="2" height="6" fill="#2a4c9c"/><rect x="332" y="452" width="2" height="6" fill="#2a4c9c"/><rect x="335" y="451" width="2" height="7" fill="#2a4c9c"/><rect x="338" y="452" width="2" height="6" fill="#2a4c9c"/><rect x="341" y="452" width="2" height="6" fill="#2a4c9c"/><rect x="344" y="453" width="2" height="5" fill="#2a4c9c"/><rect x="347" y="453" width="2" height="5" fill="#2a4c9c"/><rect x="350" y="452" width="2" height="6" fill="#2a4c9c"/><rect x="353" y="453" width="2" height="5" fill="#2a4c9c"/><rect x="356" y="453" width="2" height="5" fill="#2a4c9c"/><rect x="359" y="452" width="2" height="6" fill="#2a4c9c"/><rect x="362" y="453" width="2" height="5" fill="#2a4c9c"/><rect x="365" y="453" width="2" height="5" fill="#2a4c9c"/><rect x="368" y="452" width="2" height="6" fill="#2a4c9c"/><rect x="371" y="453" width="2" height="5" fill="#2a4c9c"/><rect x="374" y="453" width="2" height="5" fill="#2a4c9c"/><rect x="283" y="432" width="93" height="26" fill="none" stroke="#333" stroke-width="0.5" stroke-dasharray="1 2"/><rect x="307" y="464" width="11" height="11" fill="#1a1a1a"/><rect x="332" y="464" width="11" height="11" fill="#1a1a1a"/><rect x="351" y="464" width="11" height="11" fill="#1a1a1a"/><rect x="365" y="464" width="11" height="11" fill="#1a1a1a"/><text x="309.5" y="473" font-size="8" font-weight="bold" fill="#6a6a6a" font-family="Liberation Sans">A</text><text x="335" y="473" font-size="8" font-weight="bold" fill="#6a6a6a" font-family="Liberation Sans">B</text><path d="M322 467H327L326 466M327 472H322L323 473" stroke="#5a5a5a" fill="none"/><path d="M353.5 472V467H360.5V472M357 469V474M355.5 472.5L357 474L358.5 472.5" stroke="#6a6a6a" fill="none"/><path d="M367 467L374 473M367 473L374 467M372 467H374V469M372 473H374V471" stroke="#6a6a6a" fill="none"/></svg>
<div class="a" style="left:75px;top:488px;width:307px;height:19px;background:#131313"></div>
<div class="a" style="left:79px;top:497px;width:220px;height:2px;background:#0a0a0a"></div>
<div class="a" style="left:79px;top:497px;width:193px;height:2px;background:#cdb040"></div>
<div class="a" style="left:268px;top:494px;width:7px;height:7px;border-radius:50%;background:#f0f0f0"></div>
<svg class="a" style="left:306px;top:492px" width="12" height="11"><path d="M1 4H4L8 1V10L4 7H1Z" fill="#707070"/><path d="M10 3V8" stroke="#606060"/></svg>
<div class="a" style="left:320px;top:497px;width:54px;height:2px;background:#0a0a0a"></div>
<div class="a" style="left:320px;top:497px;width:31px;height:2px;background:#cdb040"></div>
<div class="a" style="left:348px;top:494px;width:7px;height:7px;border-radius:50%;background:#f0f0f0"></div>
<div class="a" style="left:75px;top:507px;width:307px;height:36px;background:#171717"></div>
<div class="a" style="left:106px;top:508px;width:1px;height:34px;background:#262626"></div>
<div class="a" style="left:138px;top:508px;width:1px;height:34px;background:#262626"></div>
<div class="a" style="left:170px;top:508px;width:1px;height:34px;background:#262626"></div>
<div class="a" style="left:201px;top:508px;width:1px;height:34px;background:#262626"></div>
<div class="a" style="left:231px;top:508px;width:1px;height:34px;background:#262626"></div>
<div class="a" style="left:351px;top:508px;width:1px;height:34px;background:#262626"></div>
<svg class="a" style="left:75px;top:508px" width="307" height="36" viewBox="75 507 307 36"><rect x="87" y="520" width="2.5" height="10" fill="#e0e0e0"/><rect x="92" y="520" width="2.5" height="10" fill="#e0e0e0"/><rect x="119" y="521" width="7" height="7" fill="#e0e0e0"/><rect x="149" y="520" width="2" height="9" fill="#e0e0e0"/><path d="M158 520V529L151 524.5Z" fill="#e0e0e0"/><rect x="187" y="520" width="2" height="9" fill="#e0e0e0"/><path d="M180 520V529L187 524.5Z" fill="#e0e0e0"/><path d="M211 526L216 520L221 526Z" fill="#e0e0e0"/><rect x="211" y="527.5" width="10" height="2" fill="#e0e0e0"/><path d="M340.00 524.50 L339.88 525.67 L337.97 526.15 L337.58 526.89 L338.24 528.74 L337.33 529.49 L335.65 528.47 L334.84 528.72 L334.00 530.50 L332.83 530.38 L332.35 528.47 L331.61 528.08 L329.76 528.74 L329.01 527.83 L330.03 526.15 L329.78 525.34 L328.00 524.50 L328.12 523.33 L330.03 522.85 L330.42 522.11 L329.76 520.26 L330.67 519.51 L332.35 520.53 L333.16 520.28 L334.00 518.50 L335.17 518.62 L335.65 520.53 L336.39 520.92 L338.24 520.26 L338.99 521.17 L337.97 522.85 L338.22 523.66Z" fill="#6e6e6e"/><circle cx="334" cy="524.5" r="1.8" fill="#171717"/><path d="M362 520.5H372.5M362 524.5H372.5M362 528.5H372.5" stroke="#d0d0d0" stroke-width="1.4"/></svg>
<div class="t" style="left:240px;top:521px;font-size:9.5px;font-weight:bold;color:#d8d8d8;transform:scaleX(0.88);transform-origin:0 0">00:01:37</div>
<div class="t" style="left:276px;top:521px;font-size:9.5px;font-weight:bold;color:#5e5e5e;transform:scaleX(0.90);transform-origin:0 0">/ 00:01:49</div>
<div class="a" style="left:385px;top:125px;width:266px;height:175px;background:#050505"></div>
<div class="a" style="left:388px;top:126px;width:262px;height:28px;background:#151515"></div>
<div class="t" style="left:393px;top:136px;font-size:9.5px;font-weight:bold;color:#c4c4c4;transform:scaleX(0.80);transform-origin:0 0">Browser</div>
<div class="a" style="left:562px;top:139px;width:11px;height:2px;background:#c8b030"></div>
<svg class="a" style="left:631px;top:134px" width="12" height="12"><path d="M1.5 1.5L10.5 10.5M10.5 1.5L1.5 10.5" stroke="#7a7a7a" stroke-width="1.2"/></svg>
<div class="a" style="left:388px;top:154px;width:262px;height:28px;background:#1e1e1e"></div>
<div class="a" style="left:388px;top:156px;width:56px;height:27px;background:#262626;border-right:2px solid #151515;border-bottom:2px solid #151515"></div>
<div class="a" style="left:444px;top:155px;width:84px;height:27px;background:#2c2c2c"></div>
<div class="a" style="left:529px;top:156px;width:121px;height:26px;background:#232323"></div>
<div class="t" style="left:394px;top:164px;font-size:11px;color:#6a6a6a;transform:scaleX(0.88);transform-origin:0 0">Navigovat</div>
<div class="t" style="left:450px;top:164px;font-size:11px;color:#d6d6d6;transform:scaleX(0.817);transform-origin:0 0">Prohlížeč nabídky</div>
<div class="t" style="left:532px;top:164px;font-size:11px;color:#6a6a6a;transform:scaleX(0.817);transform-origin:0 0">Nástroj procházení 1</div>
<div class="a" style="left:616px;top:162px;width:13px;height:15px;background:#3e3e3e"></div>
<div class="a" style="left:631px;top:162px;width:14px;height:15px;background:#3e3e3e"></div>
<svg class="a" style="left:616px;top:162px" width="30" height="15"><path d="M5 4L8.5 7.5L5 11" stroke="#aaa" stroke-width="1.5" fill="none"/><path d="M20 6L23.5 9.5L27 6" stroke="#aaa" stroke-width="1.5" fill="none"/></svg>
<div class="a" style="left:388px;top:182px;width:262px;height:116px;background:#282828"></div>
<div class="a" style="left:388px;top:205px;width:262px;height:18px;background:#2f2f2f"></div>
<svg class="a" style="left:391px;top:191px" width="12" height="10"><path d="M0.5 1.5H4L5 3H10.5V9.5H0.5Z" fill="#f0c040"/><rect x="0.5" y="3.5" width="10" height="6" fill="#f8d050"/></svg>
<div class="t" style="left:409px;top:192px;font-size:9px;color:#909090">..</div>
<div class="a" style="left:395px;top:212px;width:5px;height:5px;border-radius:1.5px;background:#3a6ae0"></div>
<div class="t" style="left:408px;top:208px;font-size:11.5px;color:#d4d4d4;transform:scaleX(0.761);transform-origin:0 0">Audio #1 - AAC(LATM), 24.0 kHz (PID:0x0065, PESID:0xc0)</div>

<div class="a" style="left:573px;top:99px;width:54px;height:53px;background:#ffffff"></div>
<svg class="a" style="left:573px;top:99px" width="54" height="53" viewBox="0 0 54 53">
<path d="M9.8 43.5A23.5 23.5 0 1 1 44.2 43.5" stroke="#1e2a88" stroke-width="1.5" fill="none"/>
<path d="M12 43.5H43" stroke="#4a5a9a" stroke-width="1.2"/>
<path d="M19 8.5Q21 28 31.5 41.5M19 8.5Q27 24 31.5 41.5M20 10Q25 26 30 40" stroke="#55557a" stroke-width="0.8" fill="none"/>
<path d="M25 26L36 24.5L31 29" stroke="#8a8aa0" stroke-width="0.8" fill="none"/>
<circle cx="16" cy="35" r="2.6" stroke="#6a6a90" stroke-width="0.9" fill="none"/>
<path d="M13 43L16 37.5L20 43M16 37.5L22 33" stroke="#6a6a90" stroke-width="0.8" fill="none"/>
<path d="M40 16Q44.5 21 43 28M43.5 14Q48.5 20 47 28" stroke="#cc1f1f" stroke-width="1.7" fill="none"/>
<text x="2.5" y="51.3" font-family="Liberation Serif" font-weight="bold" font-size="8.5" fill="#1e2a88" textLength="50" lengthAdjust="spacingAndGlyphs"><tspan fill="#c42020">DX</tspan>SATCS.COM</text>
</svg>

<div class="a" style="left:1056px;top:84px;width:139px;height:613px;border:1px solid #dadada;border-radius:2px"></div>
<div class="a" style="left:1061px;top:79px;width:88px;height:12px;background:#f0f0f0"></div>
<div class="t" style="left:1063px;top:79px;font-size:9.5px;font-weight:bold;color:#2828a8;transform:scaleX(0.83);transform-origin:0 0">Transponder (AU) [BS]</div>
<div class="t" style="left:1063px;top:105px;font-size:10px;color:#333;transform:scaleX(0.86);transform-origin:0 0">Frequency:</div>
<div class="t" style="left:1124px;top:105px;font-size:10px;font-weight:bold;color:#2c8a2c;transform:scaleX(0.86);transform-origin:0 0">11688,847 MHz</div>
<div class="t" style="left:1063px;top:137px;font-size:10px;color:#333;transform:scaleX(0.86);transform-origin:0 0">Polarization:</div>
<div class="t" style="left:1124px;top:137px;font-size:10px;font-weight:bold;color:#2c8a2c;transform:scaleX(0.86);transform-origin:0 0">Vertical</div>
<div class="t" style="left:1063px;top:168px;font-size:10px;color:#333;transform:scaleX(0.86);transform-origin:0 0">Symbol Rate:</div>
<div class="t" style="left:1124px;top:168px;font-size:10px;font-weight:bold;color:#2c8a2c;transform:scaleX(0.86);transform-origin:0 0">83,01 KS/s</div>
<div class="t" style="left:1063px;top:200px;font-size:10px;color:#333;transform:scaleX(0.86);transform-origin:0 0">Standard:</div>
<div class="t" style="left:1124px;top:200px;font-size:10px;font-weight:bold;color:#2c8a2c;transform:scaleX(0.86);transform-origin:0 0">DVB-S2</div>
<div class="t" style="left:1063px;top:231px;font-size:10px;color:#333;transform:scaleX(0.86);transform-origin:0 0">Modulation:</div>
<div class="t" style="left:1124px;top:231px;font-size:10px;font-weight:bold;color:#2c8a2c;transform:scaleX(0.86);transform-origin:0 0">QPSK-S2</div>
<div class="t" style="left:1063px;top:263px;font-size:10px;color:#333;transform:scaleX(0.86);transform-origin:0 0">FEC:</div>
<div class="t" style="left:1124px;top:263px;font-size:10px;font-weight:bold;color:#2c8a2c;transform:scaleX(0.86);transform-origin:0 0">8/9</div>
<div class="t" style="left:1063px;top:294px;font-size:10px;color:#333;transform:scaleX(0.86);transform-origin:0 0">RollOff:</div>
<div class="t" style="left:1124px;top:294px;font-size:10px;font-weight:bold;color:#2c8a2c;transform:scaleX(0.86);transform-origin:0 0">0.20</div>
<div class="t" style="left:1063px;top:326px;font-size:10px;color:#333;transform:scaleX(0.86);transform-origin:0 0">Pilot:</div>
<div class="t" style="left:1124px;top:326px;font-size:10px;font-weight:bold;color:#2c8a2c;transform:scaleX(0.86);transform-origin:0 0">OFF</div>
<div class="t" style="left:1063px;top:357px;font-size:10px;color:#333;transform:scaleX(0.86);transform-origin:0 0">Spectrum:</div>
<div class="t" style="left:1124px;top:357px;font-size:10px;font-weight:bold;color:#2c8a2c;transform:scaleX(0.86);transform-origin:0 0">Inverted</div>
<div class="t" style="left:1063px;top:389px;font-size:10px;color:#333;transform:scaleX(0.86);transform-origin:0 0">Frame Type:</div>
<div class="t" style="left:1124px;top:389px;font-size:10px;font-weight:bold;color:#2c8a2c;transform:scaleX(0.86);transform-origin:0 0">Long Frame</div>
<div class="t" style="left:1063px;top:421px;font-size:10px;color:#333;transform:scaleX(0.86);transform-origin:0 0">Code Mode:</div>
<div class="t" style="left:1124px;top:421px;font-size:10px;font-weight:bold;color:#2c8a2c;transform:scaleX(0.86);transform-origin:0 0">CCM</div>
<div class="t" style="left:1063px;top:452px;font-size:10px;color:#333;transform:scaleX(0.86);transform-origin:0 0">Stream type:</div>
<div class="t" style="left:1124px;top:452px;font-size:10px;font-weight:bold;color:#2c8a2c;transform:scaleX(0.86);transform-origin:0 0">Transport</div>
<div class="t" style="left:1063px;top:484px;font-size:10px;color:#333;transform:scaleX(0.86);transform-origin:0 0">ISSYI</div>
<div class="t" style="left:1124px;top:484px;font-size:10px;font-weight:bold;color:#2c8a2c;transform:scaleX(0.86);transform-origin:0 0">OFF</div>
<div class="t" style="left:1063px;top:515px;font-size:10px;color:#333;transform:scaleX(0.86);transform-origin:0 0">NPD:</div>
<div class="t" style="left:1124px;top:515px;font-size:10px;font-weight:bold;color:#2c8a2c;transform:scaleX(0.86);transform-origin:0 0">OFF</div>
<div class="t" style="left:1063px;top:547px;font-size:10px;color:#333;transform:scaleX(0.86);transform-origin:0 0">RF Level:</div>
<div class="t" style="left:1124px;top:547px;font-size:10px;font-weight:bold;color:#2c8a2c;transform:scaleX(0.86);transform-origin:0 0">-49 dBm</div>
<div class="t" style="left:1063px;top:578px;font-size:10px;color:#333;transform:scaleX(0.86);transform-origin:0 0">BitRate:</div>
<div class="t" style="left:1124px;top:578px;font-size:10px;font-weight:bold;color:#2c8a2c;transform:scaleX(0.86);transform-origin:0 0">0,140 Mbit/s</div>
<div class="t" style="left:1063px;top:610px;font-size:10px;color:#333;transform:scaleX(0.86);transform-origin:0 0">CarrierWidth:</div>
<div class="t" style="left:1124px;top:610px;font-size:10px;font-weight:bold;color:#2c8a2c;transform:scaleX(0.86);transform-origin:0 0">0,099 MHz</div>
<div class="t" style="left:1063px;top:656px;font-size:10px;color:#333;transform:scaleX(0.86);transform-origin:0 0">MIS (0):</div>
<div class="a" style="left:1123px;top:652px;width:57px;height:18px;background:#f8f8f8;border:1px solid #e4e4e4"></div>
<div class="t" style="left:1126px;top:656px;font-size:10px;color:#555;transform:scaleX(0.86);transform-origin:0 0">Single</div>
<svg class="a" style="left:1168px;top:658px" width="8" height="5"><path d="M0.5 0.5L4 4L7.5 0.5" stroke="#aaa" fill="none"/></svg>
<div class="a" style="left:1057px;top:703px;width:138px;height:23px;background:linear-gradient(#fdfdfd,#f2f6fa);border:1.5px solid #6a8cb0;border-radius:3px"></div>
<svg class="a" style="left:1119px;top:707px" width="13" height="14"><rect x="0.5" y="0.5" width="12" height="13" fill="#e8eef4" stroke="#8a9ab0"/><rect x="1" y="4" width="11" height="2" fill="#4a6ab0"/><rect x="1" y="9" width="11" height="1" fill="#8a9ab0"/></svg>
<div class="a" style="left:10px;top:735px;width:96px;height:17px;border:1px solid #b4b4b4;background:#e8e8e8;overflow:hidden"><div class="a" style="left:-1px;top:0;width:96px;height:15px;background:linear-gradient(#eafbea 0,#d3f5d3 50%,#76d476 54%,#8fe08f 100%)"></div></div><div class="t" style="left:13px;top:740px;font-size:10px;font-weight:bold;color:#2a1a1a;transform:scaleX(0.8);transform-origin:0 0">Present</div>
<div class="a" style="left:10px;top:756px;width:96px;height:17px;border:1px solid #b4b4b4;background:#e8e8e8;overflow:hidden"><div class="a" style="left:-1px;top:0;width:96px;height:15px;background:linear-gradient(#eafbea 0,#d3f5d3 50%,#76d476 54%,#8fe08f 100%)"></div></div><div class="t" style="left:13px;top:761px;font-size:10px;font-weight:bold;color:#2a1a1a;transform:scaleX(0.8);transform-origin:0 0">Lock</div>
<div class="a" style="left:110px;top:735px;width:490px;height:17px;border:1px solid #b4b4b4;background:#e8e8e8;overflow:hidden"><div class="a" style="left:-1px;top:0;width:48px;height:15px;background:linear-gradient(#fbe8e8 0,#f3d6d6 50%,#e4b2b2 54%,#eec6c6 100%)"></div><div class="a" style="left:47px;top:0;width:197px;height:15px;background:linear-gradient(#fffeea 0,#fcf7cf 50%,#e6dc86 54%,#efe6a2 100%)"></div><div class="a" style="left:244px;top:0;width:181px;height:15px;background:linear-gradient(#eafbea 0,#d3f5d3 50%,#76d476 54%,#8fe08f 100%)"></div><div class="a" style="left:425px;top:0;width:64px;height:15px;background:linear-gradient(#efefef 0,#e2e2e2 50%,#c6c6c6 54%,#d6d6d6 100%)"></div></div><div class="t" style="left:115px;top:740px;font-size:10px;font-weight:bold;color:#2a1a1a;transform:scaleX(0.8);transform-origin:0 0">Level: 87%</div>
<div class="a" style="left:110px;top:756px;width:490px;height:17px;border:1px solid #b4b4b4;background:#e8e8e8;overflow:hidden"><div class="a" style="left:-1px;top:0;width:48px;height:15px;background:linear-gradient(#fbe8e8 0,#f3d6d6 50%,#e4b2b2 54%,#eec6c6 100%)"></div><div class="a" style="left:47px;top:0;width:197px;height:15px;background:linear-gradient(#fffeea 0,#fcf7cf 50%,#e6dc86 54%,#efe6a2 100%)"></div><div class="a" style="left:244px;top:0;width:245px;height:15px;background:linear-gradient(#eafbea 0,#d3f5d3 50%,#76d476 54%,#8fe08f 100%)"></div></div><div class="t" style="left:115px;top:761px;font-size:10px;font-weight:bold;color:#2a1a1a;transform:scaleX(0.8);transform-origin:0 0">Quality: 100%</div>
<div class="a" style="left:603px;top:735px;width:243px;height:17px;border:1px solid #b4b4b4;background:#e8e8e8;overflow:hidden"><div class="a" style="left:-1px;top:0;width:52px;height:15px;background:linear-gradient(#fbe8e8 0,#f3d6d6 50%,#e4b2b2 54%,#eec6c6 100%)"></div><div class="a" style="left:51px;top:0;width:87px;height:15px;background:linear-gradient(#fffeea 0,#fcf7cf 50%,#e6dc86 54%,#efe6a2 100%)"></div><div class="a" style="left:138px;top:0;width:104px;height:15px;background:linear-gradient(#eafbea 0,#d3f5d3 50%,#76d476 54%,#8fe08f 100%)"></div></div><div class="t" style="left:606px;top:740px;font-size:10px;font-weight:bold;color:#2a1a1a;transform:scaleX(0.8);transform-origin:0 0">preBER: &lt;1.0E-7</div>
<div class="a" style="left:849px;top:735px;width:244px;height:17px;border:1px solid #b4b4b4;background:#e8e8e8;overflow:hidden"><div class="a" style="left:-1px;top:0;width:52px;height:15px;background:linear-gradient(#fbe8e8 0,#f3d6d6 50%,#e4b2b2 54%,#eec6c6 100%)"></div><div class="a" style="left:51px;top:0;width:88px;height:15px;background:linear-gradient(#fffeea 0,#fcf7cf 50%,#e6dc86 54%,#efe6a2 100%)"></div><div class="a" style="left:139px;top:0;width:104px;height:15px;background:linear-gradient(#eafbea 0,#d3f5d3 50%,#76d476 54%,#8fe08f 100%)"></div></div><div class="t" style="left:852px;top:740px;font-size:10px;font-weight:bold;color:#2a1a1a;transform:scaleX(0.8);transform-origin:0 0">BER: &lt;1.0E-7</div>
<div class="a" style="left:603px;top:756px;width:490px;height:17px;border:1px solid #b4b4b4;background:#e8e8e8;overflow:hidden"><div class="a" style="left:-1px;top:0;width:152px;height:15px;background:linear-gradient(#fbe8e8 0,#f3d6d6 50%,#e4b2b2 54%,#eec6c6 100%)"></div><div class="a" style="left:151px;top:0;width:122px;height:15px;background:linear-gradient(#fffeea 0,#fcf7cf 50%,#e6dc86 54%,#efe6a2 100%)"></div><div class="a" style="left:273px;top:0;width:152px;height:15px;background:linear-gradient(#eafbea 0,#d3f5d3 50%,#76d476 54%,#8fe08f 100%)"></div><div class="a" style="left:425px;top:0;width:64px;height:15px;background:linear-gradient(#efefef 0,#e2e2e2 50%,#c6c6c6 54%,#d6d6d6 100%)"></div></div><div class="t" style="left:607px;top:761px;font-size:10px;font-weight:bold;color:#2a1a1a;transform:scaleX(0.8);transform-origin:0 0">SNR: 17,4 dB (Margin: 11,2 dB | Very Good)</div>
<div class="a" style="left:1096px;top:735px;width:98px;height:17px;border:1px solid #b4b4b4;background:#e8e8e8;overflow:hidden"><div class="a" style="left:-1px;top:0;width:98px;height:15px;background:linear-gradient(#eafbea 0,#d3f5d3 50%,#76d476 54%,#8fe08f 100%)"></div></div><div class="t" style="left:1099px;top:740px;font-size:10px;font-weight:bold;color:#2a1a1a;transform:scaleX(0.8);transform-origin:0 0">Input (~188 Kbps)</div>
<div class="a" style="left:1096px;top:756px;width:98px;height:17px;border:1px solid #b4b4b4;background:#e8e8e8;overflow:hidden"><div class="a" style="left:-1px;top:0;width:98px;height:15px;background:linear-gradient(#eafbea 0,#d3f5d3 50%,#76d476 54%,#8fe08f 100%)"></div></div><div class="t" style="left:1099px;top:761px;font-size:10px;font-weight:bold;color:#2a1a1a;transform:scaleX(0.8);transform-origin:0 0">Sync TS</div>
<div class="a" style="left:2px;top:779px;width:1198px;height:1px;background:#d8d8d8"></div>
<div class="a" style="left:395px;top:782px;width:1px;height:16px;background:#a8a8a8"></div>
<div class="a" style="left:793px;top:782px;width:1px;height:16px;background:#a8a8a8"></div>
<div class="a" style="left:1189px;top:782px;width:1px;height:16px;background:#a8a8a8"></div>
<div class="t" style="left:99px;top:785px;width:200px;text-align:center;font-size:10px;font-weight:bold;color:#222;transform:scaleX(0.862)">Locked -&gt; Uptime: 01:23:41</div>
<div class="t" style="left:496px;top:785px;width:200px;text-align:center;font-size:10px;font-weight:bold;color:#222;transform:scaleX(0.856)">SYNC 0 | TEI 0 | CC 0</div>
<div class="t" style="left:892px;top:785px;width:200px;text-align:center;font-size:10px;font-weight:bold;color:#222;transform:scaleX(0.869)">Best signal: 17,4 dB (2024-04-07 14:13)</div>
<svg class="a" style="left:1190px;top:788px" width="10" height="12"><g fill="#9a9a9a"><rect x="7" y="2" width="1.5" height="1.5"/><rect x="4" y="5" width="1.5" height="1.5"/><rect x="7" y="5" width="1.5" height="1.5"/><rect x="1" y="8" width="1.5" height="1.5"/><rect x="4" y="8" width="1.5" height="1.5"/><rect x="7" y="8" width="1.5" height="1.5"/></g></svg>
</body></html>
